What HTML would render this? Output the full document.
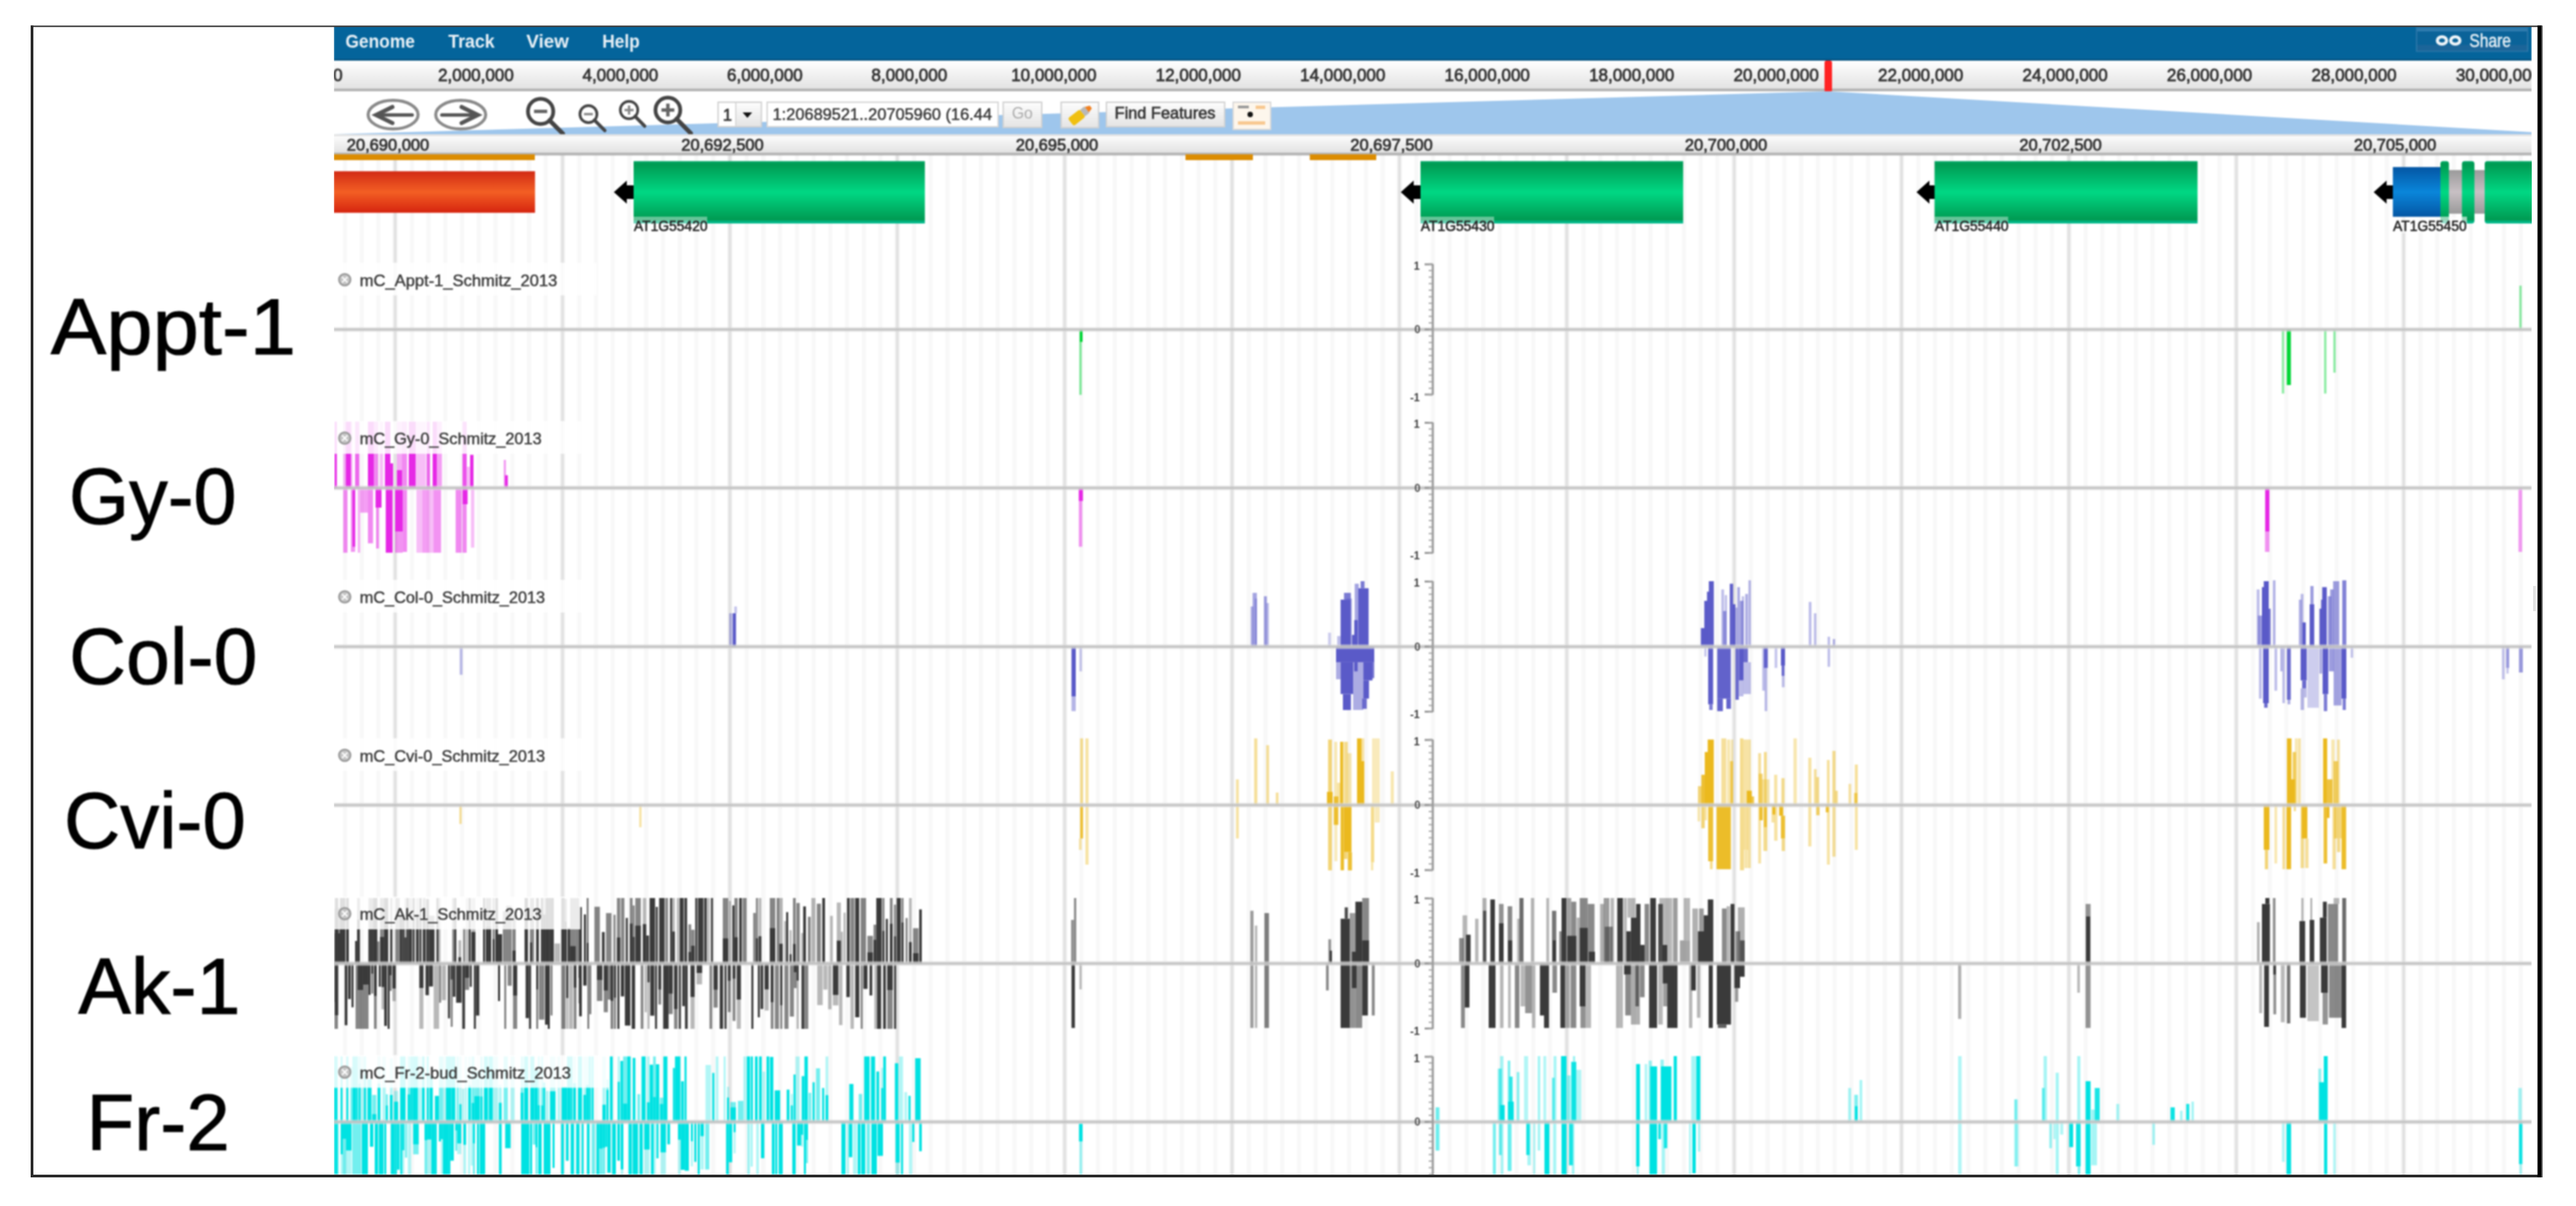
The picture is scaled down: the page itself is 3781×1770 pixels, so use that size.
<!DOCTYPE html>
<html><head><meta charset="utf-8"><title>Genome browser</title>
<style>
html,body{margin:0;padding:0;background:#fff;}
body{width:3781px;height:1770px;overflow:hidden;}
svg{display:block;font-family:"Liberation Sans",sans-serif;}
</style></head><body>
<svg width="3781" height="1770" viewBox="0 0 3781 1770">
<defs>
<linearGradient id="gGreen" x1="0" y1="0" x2="0" y2="1">
<stop offset="0" stop-color="#00a866"/><stop offset="0.05" stop-color="#009a52"/><stop offset="0.5" stop-color="#00d884"/><stop offset="0.94" stop-color="#009a52"/><stop offset="0.97" stop-color="#00b888"/><stop offset="1" stop-color="#00b888"/></linearGradient>
<linearGradient id="gRed" x1="0" y1="0" x2="0" y2="1">
<stop offset="0" stop-color="#d22a14"/><stop offset="0.5" stop-color="#f35f24"/><stop offset="1" stop-color="#d6240f"/></linearGradient>
<linearGradient id="gBlue" x1="0" y1="0" x2="0" y2="1">
<stop offset="0" stop-color="#0456a4"/><stop offset="0.5" stop-color="#0a86da"/><stop offset="1" stop-color="#0456a4"/></linearGradient>
<linearGradient id="gGray" x1="0" y1="0" x2="0" y2="1">
<stop offset="0" stop-color="#9a9a9a"/><stop offset="0.5" stop-color="#c8c0c4"/><stop offset="1" stop-color="#9a9a9a"/></linearGradient>
<linearGradient id="gRuler" x1="0" y1="0" x2="0" y2="1">
<stop offset="0" stop-color="#ffffff"/><stop offset="1" stop-color="#e2e2e2"/></linearGradient>
<linearGradient id="gBtn" x1="0" y1="0" x2="0" y2="1">
<stop offset="0" stop-color="#fdfdfd"/><stop offset="1" stop-color="#e4e4e4"/></linearGradient>
<clipPath id="clipB"><rect x="490" y="38" width="3226" height="1686"/></clipPath>
<filter id="soft" x="-2%" y="-2%" width="104%" height="104%" color-interpolation-filters="sRGB"><feGaussianBlur stdDeviation="1.0"/></filter>
<filter id="soft2" x="-5%" y="-5%" width="110%" height="110%" color-interpolation-filters="sRGB"><feGaussianBlur stdDeviation="0.9"/></filter>
</defs>
<g clip-path="url(#clipB)">
<g filter="url(#soft)">
<rect x="470.0" y="20.0" width="3270.0" height="1730.0" fill="#ffffff" />
<rect x="503.3" y="228.0" width="6.0" height="1500.0" fill="#f8f8f8" />
<rect x="527.9" y="228.0" width="6.0" height="1500.0" fill="#f8f8f8" />
<rect x="552.4" y="228.0" width="6.0" height="1500.0" fill="#f8f8f8" />
<rect x="576.4" y="228.0" width="7.2" height="1500.0" fill="#f2f2f2" />
<rect x="578.1" y="228.0" width="3.8" height="1500.0" fill="#e1e1e1" />
<rect x="601.6" y="228.0" width="6.0" height="1500.0" fill="#f8f8f8" />
<rect x="626.1" y="228.0" width="6.0" height="1500.0" fill="#f8f8f8" />
<rect x="650.7" y="228.0" width="6.0" height="1500.0" fill="#f8f8f8" />
<rect x="675.3" y="228.0" width="6.0" height="1500.0" fill="#f8f8f8" />
<rect x="699.8" y="228.0" width="6.0" height="1500.0" fill="#f8f8f8" />
<rect x="724.4" y="228.0" width="6.0" height="1500.0" fill="#f8f8f8" />
<rect x="749.0" y="228.0" width="6.0" height="1500.0" fill="#f8f8f8" />
<rect x="773.5" y="228.0" width="6.0" height="1500.0" fill="#f8f8f8" />
<rect x="798.1" y="228.0" width="6.0" height="1500.0" fill="#f8f8f8" />
<rect x="822.1" y="228.0" width="7.2" height="1500.0" fill="#f2f2f2" />
<rect x="823.8" y="228.0" width="3.8" height="1500.0" fill="#e1e1e1" />
<rect x="847.2" y="228.0" width="6.0" height="1500.0" fill="#f8f8f8" />
<rect x="871.8" y="228.0" width="6.0" height="1500.0" fill="#f8f8f8" />
<rect x="896.4" y="228.0" width="6.0" height="1500.0" fill="#f8f8f8" />
<rect x="920.9" y="228.0" width="6.0" height="1500.0" fill="#f8f8f8" />
<rect x="945.5" y="228.0" width="6.0" height="1500.0" fill="#f8f8f8" />
<rect x="970.1" y="228.0" width="6.0" height="1500.0" fill="#f8f8f8" />
<rect x="994.6" y="228.0" width="6.0" height="1500.0" fill="#f8f8f8" />
<rect x="1019.2" y="228.0" width="6.0" height="1500.0" fill="#f8f8f8" />
<rect x="1043.8" y="228.0" width="6.0" height="1500.0" fill="#f8f8f8" />
<rect x="1067.7" y="228.0" width="7.2" height="1500.0" fill="#f2f2f2" />
<rect x="1069.4" y="228.0" width="3.8" height="1500.0" fill="#e1e1e1" />
<rect x="1092.9" y="228.0" width="6.0" height="1500.0" fill="#f8f8f8" />
<rect x="1117.5" y="228.0" width="6.0" height="1500.0" fill="#f8f8f8" />
<rect x="1142.0" y="228.0" width="6.0" height="1500.0" fill="#f8f8f8" />
<rect x="1166.6" y="228.0" width="6.0" height="1500.0" fill="#f8f8f8" />
<rect x="1191.2" y="228.0" width="6.0" height="1500.0" fill="#f8f8f8" />
<rect x="1215.7" y="228.0" width="6.0" height="1500.0" fill="#f8f8f8" />
<rect x="1240.3" y="228.0" width="6.0" height="1500.0" fill="#f8f8f8" />
<rect x="1264.9" y="228.0" width="6.0" height="1500.0" fill="#f8f8f8" />
<rect x="1289.4" y="228.0" width="6.0" height="1500.0" fill="#f8f8f8" />
<rect x="1313.4" y="228.0" width="7.2" height="1500.0" fill="#f2f2f2" />
<rect x="1315.1" y="228.0" width="3.8" height="1500.0" fill="#e1e1e1" />
<rect x="1338.6" y="228.0" width="6.0" height="1500.0" fill="#f8f8f8" />
<rect x="1363.1" y="228.0" width="6.0" height="1500.0" fill="#f8f8f8" />
<rect x="1387.7" y="228.0" width="6.0" height="1500.0" fill="#f8f8f8" />
<rect x="1412.3" y="228.0" width="6.0" height="1500.0" fill="#f8f8f8" />
<rect x="1436.8" y="228.0" width="6.0" height="1500.0" fill="#f8f8f8" />
<rect x="1461.4" y="228.0" width="6.0" height="1500.0" fill="#f8f8f8" />
<rect x="1486.0" y="228.0" width="6.0" height="1500.0" fill="#f8f8f8" />
<rect x="1510.5" y="228.0" width="6.0" height="1500.0" fill="#f8f8f8" />
<rect x="1535.1" y="228.0" width="6.0" height="1500.0" fill="#f8f8f8" />
<rect x="1559.1" y="228.0" width="7.2" height="1500.0" fill="#f2f2f2" />
<rect x="1560.8" y="228.0" width="3.8" height="1500.0" fill="#e1e1e1" />
<rect x="1584.2" y="228.0" width="6.0" height="1500.0" fill="#f8f8f8" />
<rect x="1608.8" y="228.0" width="6.0" height="1500.0" fill="#f8f8f8" />
<rect x="1633.4" y="228.0" width="6.0" height="1500.0" fill="#f8f8f8" />
<rect x="1657.9" y="228.0" width="6.0" height="1500.0" fill="#f8f8f8" />
<rect x="1682.5" y="228.0" width="6.0" height="1500.0" fill="#f8f8f8" />
<rect x="1707.1" y="228.0" width="6.0" height="1500.0" fill="#f8f8f8" />
<rect x="1731.6" y="228.0" width="6.0" height="1500.0" fill="#f8f8f8" />
<rect x="1756.2" y="228.0" width="6.0" height="1500.0" fill="#f8f8f8" />
<rect x="1780.8" y="228.0" width="6.0" height="1500.0" fill="#f8f8f8" />
<rect x="1804.8" y="228.0" width="7.2" height="1500.0" fill="#f2f2f2" />
<rect x="1806.4" y="228.0" width="3.8" height="1500.0" fill="#e1e1e1" />
<rect x="1829.9" y="228.0" width="6.0" height="1500.0" fill="#f8f8f8" />
<rect x="1854.5" y="228.0" width="6.0" height="1500.0" fill="#f8f8f8" />
<rect x="1879.1" y="228.0" width="6.0" height="1500.0" fill="#f8f8f8" />
<rect x="1903.6" y="228.0" width="6.0" height="1500.0" fill="#f8f8f8" />
<rect x="1928.2" y="228.0" width="6.0" height="1500.0" fill="#f8f8f8" />
<rect x="1952.8" y="228.0" width="6.0" height="1500.0" fill="#f8f8f8" />
<rect x="1977.3" y="228.0" width="6.0" height="1500.0" fill="#f8f8f8" />
<rect x="2001.9" y="228.0" width="6.0" height="1500.0" fill="#f8f8f8" />
<rect x="2026.5" y="228.0" width="6.0" height="1500.0" fill="#f8f8f8" />
<rect x="2050.4" y="228.0" width="7.2" height="1500.0" fill="#f2f2f2" />
<rect x="2052.1" y="228.0" width="3.8" height="1500.0" fill="#e1e1e1" />
<rect x="2075.6" y="228.0" width="6.0" height="1500.0" fill="#f8f8f8" />
<rect x="2100.2" y="228.0" width="6.0" height="1500.0" fill="#f8f8f8" />
<rect x="2124.7" y="228.0" width="6.0" height="1500.0" fill="#f8f8f8" />
<rect x="2149.3" y="228.0" width="6.0" height="1500.0" fill="#f8f8f8" />
<rect x="2173.9" y="228.0" width="6.0" height="1500.0" fill="#f8f8f8" />
<rect x="2198.4" y="228.0" width="6.0" height="1500.0" fill="#f8f8f8" />
<rect x="2223.0" y="228.0" width="6.0" height="1500.0" fill="#f8f8f8" />
<rect x="2247.6" y="228.0" width="6.0" height="1500.0" fill="#f8f8f8" />
<rect x="2272.1" y="228.0" width="6.0" height="1500.0" fill="#f8f8f8" />
<rect x="2296.1" y="228.0" width="7.2" height="1500.0" fill="#f2f2f2" />
<rect x="2297.8" y="228.0" width="3.8" height="1500.0" fill="#e1e1e1" />
<rect x="2321.3" y="228.0" width="6.0" height="1500.0" fill="#f8f8f8" />
<rect x="2345.8" y="228.0" width="6.0" height="1500.0" fill="#f8f8f8" />
<rect x="2370.4" y="228.0" width="6.0" height="1500.0" fill="#f8f8f8" />
<rect x="2395.0" y="228.0" width="6.0" height="1500.0" fill="#f8f8f8" />
<rect x="2419.5" y="228.0" width="6.0" height="1500.0" fill="#f8f8f8" />
<rect x="2444.1" y="228.0" width="6.0" height="1500.0" fill="#f8f8f8" />
<rect x="2468.7" y="228.0" width="6.0" height="1500.0" fill="#f8f8f8" />
<rect x="2493.2" y="228.0" width="6.0" height="1500.0" fill="#f8f8f8" />
<rect x="2517.8" y="228.0" width="6.0" height="1500.0" fill="#f8f8f8" />
<rect x="2541.8" y="228.0" width="7.2" height="1500.0" fill="#f2f2f2" />
<rect x="2543.5" y="228.0" width="3.8" height="1500.0" fill="#e1e1e1" />
<rect x="2566.9" y="228.0" width="6.0" height="1500.0" fill="#f8f8f8" />
<rect x="2591.5" y="228.0" width="6.0" height="1500.0" fill="#f8f8f8" />
<rect x="2616.1" y="228.0" width="6.0" height="1500.0" fill="#f8f8f8" />
<rect x="2640.6" y="228.0" width="6.0" height="1500.0" fill="#f8f8f8" />
<rect x="2665.2" y="228.0" width="6.0" height="1500.0" fill="#f8f8f8" />
<rect x="2689.8" y="228.0" width="6.0" height="1500.0" fill="#f8f8f8" />
<rect x="2714.3" y="228.0" width="6.0" height="1500.0" fill="#f8f8f8" />
<rect x="2738.9" y="228.0" width="6.0" height="1500.0" fill="#f8f8f8" />
<rect x="2763.5" y="228.0" width="6.0" height="1500.0" fill="#f8f8f8" />
<rect x="2787.4" y="228.0" width="7.2" height="1500.0" fill="#f2f2f2" />
<rect x="2789.1" y="228.0" width="3.8" height="1500.0" fill="#e1e1e1" />
<rect x="2812.6" y="228.0" width="6.0" height="1500.0" fill="#f8f8f8" />
<rect x="2837.2" y="228.0" width="6.0" height="1500.0" fill="#f8f8f8" />
<rect x="2861.7" y="228.0" width="6.0" height="1500.0" fill="#f8f8f8" />
<rect x="2886.3" y="228.0" width="6.0" height="1500.0" fill="#f8f8f8" />
<rect x="2910.9" y="228.0" width="6.0" height="1500.0" fill="#f8f8f8" />
<rect x="2935.4" y="228.0" width="6.0" height="1500.0" fill="#f8f8f8" />
<rect x="2960.0" y="228.0" width="6.0" height="1500.0" fill="#f8f8f8" />
<rect x="2984.6" y="228.0" width="6.0" height="1500.0" fill="#f8f8f8" />
<rect x="3009.1" y="228.0" width="6.0" height="1500.0" fill="#f8f8f8" />
<rect x="3033.1" y="228.0" width="7.2" height="1500.0" fill="#f2f2f2" />
<rect x="3034.8" y="228.0" width="3.8" height="1500.0" fill="#e1e1e1" />
<rect x="3058.3" y="228.0" width="6.0" height="1500.0" fill="#f8f8f8" />
<rect x="3082.8" y="228.0" width="6.0" height="1500.0" fill="#f8f8f8" />
<rect x="3107.4" y="228.0" width="6.0" height="1500.0" fill="#f8f8f8" />
<rect x="3132.0" y="228.0" width="6.0" height="1500.0" fill="#f8f8f8" />
<rect x="3156.5" y="228.0" width="6.0" height="1500.0" fill="#f8f8f8" />
<rect x="3181.1" y="228.0" width="6.0" height="1500.0" fill="#f8f8f8" />
<rect x="3205.7" y="228.0" width="6.0" height="1500.0" fill="#f8f8f8" />
<rect x="3230.2" y="228.0" width="6.0" height="1500.0" fill="#f8f8f8" />
<rect x="3254.8" y="228.0" width="6.0" height="1500.0" fill="#f8f8f8" />
<rect x="3278.8" y="228.0" width="7.2" height="1500.0" fill="#f2f2f2" />
<rect x="3280.5" y="228.0" width="3.8" height="1500.0" fill="#e1e1e1" />
<rect x="3303.9" y="228.0" width="6.0" height="1500.0" fill="#f8f8f8" />
<rect x="3328.5" y="228.0" width="6.0" height="1500.0" fill="#f8f8f8" />
<rect x="3353.1" y="228.0" width="6.0" height="1500.0" fill="#f8f8f8" />
<rect x="3377.6" y="228.0" width="6.0" height="1500.0" fill="#f8f8f8" />
<rect x="3402.2" y="228.0" width="6.0" height="1500.0" fill="#f8f8f8" />
<rect x="3426.8" y="228.0" width="6.0" height="1500.0" fill="#f8f8f8" />
<rect x="3451.3" y="228.0" width="6.0" height="1500.0" fill="#f8f8f8" />
<rect x="3475.9" y="228.0" width="6.0" height="1500.0" fill="#f8f8f8" />
<rect x="3500.5" y="228.0" width="6.0" height="1500.0" fill="#f8f8f8" />
<rect x="3524.4" y="228.0" width="7.2" height="1500.0" fill="#f2f2f2" />
<rect x="3526.1" y="228.0" width="3.8" height="1500.0" fill="#e1e1e1" />
<rect x="3549.6" y="228.0" width="6.0" height="1500.0" fill="#f8f8f8" />
<rect x="3574.2" y="228.0" width="6.0" height="1500.0" fill="#f8f8f8" />
<rect x="3598.7" y="228.0" width="6.0" height="1500.0" fill="#f8f8f8" />
<rect x="3623.3" y="228.0" width="6.0" height="1500.0" fill="#f8f8f8" />
<rect x="3647.9" y="228.0" width="6.0" height="1500.0" fill="#f8f8f8" />
<rect x="3672.4" y="228.0" width="6.0" height="1500.0" fill="#f8f8f8" />
<rect x="3697.0" y="228.0" width="6.0" height="1500.0" fill="#f8f8f8" />
<rect x="490.0" y="38.0" width="3226.0" height="51.0" fill="#04649b" />
<rect x="490.0" y="86.6" width="3226.0" height="2.4" fill="#04527f" />
<text x="507" y="69.9" font-size="27" fill="#e8f0f6" text-anchor="start" font-weight="bold" textLength="102" lengthAdjust="spacingAndGlyphs">Genome</text>
<text x="658" y="69.9" font-size="27" fill="#e8f0f6" text-anchor="start" font-weight="bold" textLength="68" lengthAdjust="spacingAndGlyphs">Track</text>
<text x="772.5" y="69.9" font-size="27" fill="#e8f0f6" text-anchor="start" font-weight="bold" textLength="62.5" lengthAdjust="spacingAndGlyphs">View</text>
<text x="884" y="69.9" font-size="27" fill="#e8f0f6" text-anchor="start" font-weight="bold" textLength="55" lengthAdjust="spacingAndGlyphs">Help</text>
<rect x="3547.0" y="40.6" width="163.0" height="34.6" fill="#0a6399" stroke="#2a76a8" stroke-width="2"/>
<rect x="3548.0" y="41.6" width="161.0" height="4.5" fill="#3a82b4" opacity="0.8"/>
<rect x="3548.0" y="66.0" width="161.0" height="8.5" fill="#26689a" opacity="0.6"/>
<g fill="none" stroke="#f0f5f9" stroke-width="4.6"><ellipse cx="3584.3" cy="59.4" rx="6.8" ry="5.4"/><ellipse cx="3603.8" cy="59.4" rx="6.8" ry="5.4"/></g>
<text x="3624.5" y="69.3" font-size="27" fill="#e8f0f6" text-anchor="start" font-weight="normal" textLength="61" lengthAdjust="spacingAndGlyphs" stroke="#e8f0f6" stroke-width="0.6">Share</text>
<rect x="490.0" y="89.0" width="3226.0" height="42.0" fill="url(#gRuler)" />
<rect x="490.0" y="130.0" width="3226.0" height="4.0" fill="#b4b4b4" />
<text x="489" y="119" font-size="25" fill="#333" text-anchor="start" font-weight="normal" stroke="#333" stroke-width="1.0">0</text>
<text x="698.55" y="119" font-size="25" fill="#333" text-anchor="middle" font-weight="normal" stroke="#333" stroke-width="1.0">2,000,000</text>
<text x="910.6" y="119" font-size="25" fill="#333" text-anchor="middle" font-weight="normal" stroke="#333" stroke-width="1.0">4,000,000</text>
<text x="1122.65" y="119" font-size="25" fill="#333" text-anchor="middle" font-weight="normal" stroke="#333" stroke-width="1.0">6,000,000</text>
<text x="1334.7" y="119" font-size="25" fill="#333" text-anchor="middle" font-weight="normal" stroke="#333" stroke-width="1.0">8,000,000</text>
<text x="1546.75" y="119" font-size="25" fill="#333" text-anchor="middle" font-weight="normal" stroke="#333" stroke-width="1.0">10,000,000</text>
<text x="1758.8000000000002" y="119" font-size="25" fill="#333" text-anchor="middle" font-weight="normal" stroke="#333" stroke-width="1.0">12,000,000</text>
<text x="1970.8500000000001" y="119" font-size="25" fill="#333" text-anchor="middle" font-weight="normal" stroke="#333" stroke-width="1.0">14,000,000</text>
<text x="2182.9" y="119" font-size="25" fill="#333" text-anchor="middle" font-weight="normal" stroke="#333" stroke-width="1.0">16,000,000</text>
<text x="2394.95" y="119" font-size="25" fill="#333" text-anchor="middle" font-weight="normal" stroke="#333" stroke-width="1.0">18,000,000</text>
<text x="2607.0" y="119" font-size="25" fill="#333" text-anchor="middle" font-weight="normal" stroke="#333" stroke-width="1.0">20,000,000</text>
<text x="2819.05" y="119" font-size="25" fill="#333" text-anchor="middle" font-weight="normal" stroke="#333" stroke-width="1.0">22,000,000</text>
<text x="3031.1000000000004" y="119" font-size="25" fill="#333" text-anchor="middle" font-weight="normal" stroke="#333" stroke-width="1.0">24,000,000</text>
<text x="3243.15" y="119" font-size="25" fill="#333" text-anchor="middle" font-weight="normal" stroke="#333" stroke-width="1.0">26,000,000</text>
<text x="3455.2000000000003" y="119" font-size="25" fill="#333" text-anchor="middle" font-weight="normal" stroke="#333" stroke-width="1.0">28,000,000</text>
<text x="3667.25" y="119" font-size="25" fill="#333" text-anchor="middle" font-weight="normal" stroke="#333" stroke-width="1.0">30,000,000</text>
<rect x="2678.0" y="89.0" width="11.0" height="46.0" fill="#ff2222" rx="3"/>
<rect x="490.0" y="134.0" width="3226.0" height="65.0" fill="#ffffff" />
<polygon points="2683,134 3716,194 3716,197 490,197" fill="#9ec6ec"/>
<g fill="none" stroke="#666" stroke-width="3.5" stroke-linecap="round" stroke-linejoin="round">
<ellipse cx="577" cy="168.3" rx="36.7" ry="21" stroke="#8a8a8a" stroke-width="4.5"/>
<ellipse cx="676.2" cy="168.3" rx="36.7" ry="21" stroke="#8a8a8a" stroke-width="4.5"/>
<path d="M605 168.8 H554" stroke-width="5" stroke="#555"/><path d="M576 157 L552 168.8 L576 180.6" stroke-width="6" stroke="#555" stroke-linejoin="miter"/>
<path d="M648.5 168.8 H699.5" stroke-width="5" stroke="#555"/><path d="M677.5 157 L701.5 168.8 L677.5 180.6" stroke-width="6" stroke="#555" stroke-linejoin="miter"/>
<circle cx="793.5" cy="163.5" r="18.6" stroke="#444" stroke-width="5.5"/>
<path d="M806.7 176.7 L826 196" stroke="#444" stroke-width="6.5"/>
<path d="M783.828 163.5 H803.172" stroke="#666" stroke-width="5.0" stroke-linecap="butt"/>
<circle cx="863.7" cy="167.5" r="12.5" stroke="#444" stroke-width="4"/>
<path d="M872.5 176.3 L887.7 191.5" stroke="#444" stroke-width="5"/>
<path d="M857.2 167.5 H870.2" stroke="#888" stroke-width="3.5" stroke-linecap="butt"/>
<circle cx="923.3" cy="161.5" r="12.8" stroke="#444" stroke-width="4"/>
<path d="M932.2 170.7 L946.2 185" stroke="#444" stroke-width="5"/>
<path d="M916.644 161.5 H929.9559999999999" stroke="#888" stroke-width="3.5" stroke-linecap="butt"/>
<path d="M923.3 154.844 V168.156" stroke="#888" stroke-width="3.5" stroke-linecap="butt"/>
<circle cx="980.3" cy="161.5" r="18.2" stroke="#444" stroke-width="5.5"/>
<path d="M993.1 174.5 L1013.8 195.5" stroke="#444" stroke-width="6.5"/>
<path d="M970.8359999999999 161.5 H989.764" stroke="#666" stroke-width="5.0" stroke-linecap="butt"/>
<path d="M980.3 152.036 V170.964" stroke="#666" stroke-width="5.0" stroke-linecap="butt"/>
</g>
<rect x="1054.0" y="150.0" width="63.5" height="36.0" fill="url(#gBtn)" stroke="#d0d0d0" stroke-width="2"/>
<rect x="1055.0" y="151.0" width="24.0" height="34.0" fill="#ffffff" />
<rect x="1079.0" y="151.0" width="2.0" height="34.0" fill="#d8d8d8" />
<text x="1061" y="176.5" font-size="24" fill="#333" text-anchor="start" font-weight="normal" stroke="#333" stroke-width="0.8">1</text>
<polygon points="1090,165 1104,165 1097,173" fill="#111"/>
<rect x="1126.0" y="150.0" width="339.0" height="36.0" fill="#ffffff" stroke="#d4d4d4" stroke-width="2"/>
<text x="1134" y="175.5" font-size="24" fill="#3a3a3a" text-anchor="start" font-weight="normal" textLength="322" lengthAdjust="spacingAndGlyphs" stroke="#3a3a3a" stroke-width="0.6">1:20689521..20705960 (16.44</text>
<rect x="1472.5" y="150.0" width="56.5" height="37.0" fill="url(#gBtn)" stroke="#d0d0d0" stroke-width="2"/>
<text x="1500.5" y="174" font-size="23" fill="#aaa" text-anchor="middle" font-weight="normal" >Go</text>
<rect x="1557.5" y="150.0" width="55.0" height="37.5" fill="url(#gBtn)" stroke="#d0d0d0" stroke-width="2"/>
<g transform="translate(1585,169) rotate(-38)"><rect x="-17" y="-7" width="22" height="14" rx="3" fill="#f0c010"/><rect x="5" y="-6" width="8" height="12" fill="#b8b8b8"/><polygon points="13,-5 20,-2 20,3 13,5" fill="#f08020"/></g>
<rect x="1624.0" y="150.0" width="173.5" height="36.0" fill="url(#gBtn)" stroke="#d0d0d0" stroke-width="2"/>
<text x="1636" y="174" font-size="24" fill="#333" text-anchor="start" font-weight="normal" textLength="148" lengthAdjust="spacingAndGlyphs" stroke="#333" stroke-width="0.8">Find Features</text>
<rect x="1810.0" y="150.0" width="55.0" height="40.0" fill="#fdf6ec" stroke="#d8d8d8" stroke-width="2"/>
<circle cx="1835" cy="168" r="4" fill="#111"/>
<rect x="1817.0" y="178.0" width="40.0" height="5.0" fill="#f8c890" />
<rect x="1843.0" y="155.0" width="14.0" height="5.0" fill="#f8c890" />
<rect x="1817.0" y="155.0" width="16.0" height="4.0" fill="#999" />
<rect x="490.0" y="197.0" width="3226.0" height="27.0" fill="url(#gRuler)" />
<rect x="490.0" y="197.0" width="3226.0" height="3.0" fill="#e4e4e4" />
<rect x="490.0" y="224.0" width="3226.0" height="4.2" fill="#b6b6b6" />
<text x="509.0" y="221" font-size="24" fill="#333" text-anchor="start" font-weight="normal" textLength="121" lengthAdjust="spacingAndGlyphs" stroke="#333" stroke-width="1.0">20,690,000</text>
<text x="1000.0" y="221" font-size="24" fill="#333" text-anchor="start" font-weight="normal" textLength="121" lengthAdjust="spacingAndGlyphs" stroke="#333" stroke-width="1.0">20,692,500</text>
<text x="1491.0" y="221" font-size="24" fill="#333" text-anchor="start" font-weight="normal" textLength="121" lengthAdjust="spacingAndGlyphs" stroke="#333" stroke-width="1.0">20,695,000</text>
<text x="1982.0" y="221" font-size="24" fill="#333" text-anchor="start" font-weight="normal" textLength="121" lengthAdjust="spacingAndGlyphs" stroke="#333" stroke-width="1.0">20,697,500</text>
<text x="2473.0" y="221" font-size="24" fill="#333" text-anchor="start" font-weight="normal" textLength="121" lengthAdjust="spacingAndGlyphs" stroke="#333" stroke-width="1.0">20,700,000</text>
<text x="2964.0" y="221" font-size="24" fill="#333" text-anchor="start" font-weight="normal" textLength="121" lengthAdjust="spacingAndGlyphs" stroke="#333" stroke-width="1.0">20,702,500</text>
<text x="3455.0" y="221" font-size="24" fill="#333" text-anchor="start" font-weight="normal" textLength="121" lengthAdjust="spacingAndGlyphs" stroke="#333" stroke-width="1.0">20,705,000</text>
<rect x="490.0" y="226.5" width="295.0" height="8.5" fill="#dc8c00" />
<rect x="1740.0" y="226.5" width="99.0" height="8.5" fill="#dc8c00" />
<rect x="1922.5" y="226.5" width="97.5" height="8.5" fill="#dc8c00" />
<rect x="490.0" y="251.3" width="295.3" height="61.0" fill="url(#gRed)" />
<polygon points="901,282 920,265 920,272 931,272 931,292 920,292 920,299" fill="#000"/>
<rect x="930.0" y="236.5" width="427.5" height="91.5" fill="url(#gGreen)" />
<rect x="930.0" y="318.0" width="108.0" height="24.0" fill="#ffffff" opacity="0.4"/>
<text x="930.5" y="339.4" font-size="22" fill="#222" text-anchor="start" font-weight="normal" textLength="108" lengthAdjust="spacingAndGlyphs" stroke="#222" stroke-width="0.7">AT1G55420</text>
<polygon points="2056,282 2075,265 2075,272 2086,272 2086,292 2075,292 2075,299" fill="#000"/>
<rect x="2085.0" y="236.5" width="385.5" height="91.5" fill="url(#gGreen)" />
<rect x="2085.0" y="318.0" width="108.0" height="24.0" fill="#ffffff" opacity="0.4"/>
<text x="2085.5" y="339.4" font-size="22" fill="#222" text-anchor="start" font-weight="normal" textLength="108" lengthAdjust="spacingAndGlyphs" stroke="#222" stroke-width="0.7">AT1G55430</text>
<polygon points="2813,282 2832,265 2832,272 2843,272 2843,292 2832,292 2832,299" fill="#000"/>
<rect x="2839.5" y="236.5" width="386.0" height="91.5" fill="url(#gGreen)" />
<rect x="2839.5" y="318.0" width="108.0" height="24.0" fill="#ffffff" opacity="0.4"/>
<text x="2840.0" y="339.4" font-size="22" fill="#222" text-anchor="start" font-weight="normal" textLength="108" lengthAdjust="spacingAndGlyphs" stroke="#222" stroke-width="0.7">AT1G55440</text>
<polygon points="3484,282 3503,265 3503,272 3514,272 3514,292 3503,292 3503,299" fill="#000"/>
<rect x="3593.0" y="249.6" width="60.0" height="64.0" fill="url(#gGray)" />
<rect x="3512.2" y="245.2" width="71.0" height="73.2" fill="url(#gBlue)" />
<rect x="3582.0" y="236.5" width="12.5" height="91.5" fill="url(#gGreen)" rx="4"/>
<rect x="3613.6" y="236.5" width="18.3" height="91.5" fill="url(#gGreen)" rx="4"/>
<rect x="3647.0" y="236.5" width="80.0" height="91.5" fill="url(#gGreen)" rx="4"/>
<rect x="3512.0" y="318.0" width="109.0" height="24.0" fill="#ffffff" opacity="0.6"/>
<text x="3512.5" y="339.4" font-size="22" fill="#222" text-anchor="start" font-weight="normal" textLength="108" lengthAdjust="spacingAndGlyphs" stroke="#222" stroke-width="0.7">AT1G55450</text>
<rect x="1584.2" y="483.5" width="3.5" height="96.0" fill="#00d535" opacity="0.5"/>
<rect x="1585.0" y="483.5" width="4.0" height="18.2" fill="#00d535" />
<rect x="3349.2" y="483.5" width="3.5" height="94.1" fill="#00d535" opacity="0.45"/>
<rect x="3356.5" y="483.5" width="6.0" height="81.6" fill="#00d535" />
<rect x="3411.2" y="483.5" width="3.5" height="94.1" fill="#00d535" opacity="0.45"/>
<rect x="3424.8" y="483.5" width="3.5" height="63.4" fill="#00d535" opacity="0.45"/>
<rect x="3697.8" y="419.2" width="3.5" height="64.3" fill="#00d535" opacity="0.45"/>
<rect x="491.2" y="618.8" width="3.2" height="97.5" fill="#e628e6" />
<rect x="503.8" y="618.8" width="3.8" height="97.5" fill="#e628e6" opacity="0.35"/>
<rect x="507.5" y="618.8" width="7.5" height="97.5" fill="#e628e6" />
<rect x="515.0" y="618.8" width="2.5" height="97.5" fill="#e628e6" opacity="0.35"/>
<rect x="521.2" y="618.8" width="6.2" height="97.5" fill="#e628e6" opacity="0.7"/>
<rect x="540.0" y="618.8" width="8.8" height="97.5" fill="#e628e6" />
<rect x="548.8" y="618.8" width="6.2" height="97.5" fill="#e628e6" opacity="0.55"/>
<rect x="557.5" y="618.8" width="5.0" height="97.5" fill="#e628e6" opacity="0.3"/>
<rect x="565.0" y="618.8" width="8.0" height="97.5" fill="#e628e6" />
<rect x="573.0" y="680.0" width="4.0" height="36.2" fill="#e628e6" />
<rect x="582.5" y="690.0" width="7.5" height="26.2" fill="#e628e6" />
<rect x="582.5" y="618.8" width="7.5" height="71.2" fill="#e628e6" opacity="0.4"/>
<rect x="590.0" y="618.8" width="7.5" height="97.5" fill="#e628e6" opacity="0.55"/>
<rect x="600.0" y="618.8" width="10.0" height="97.5" fill="#e628e6" />
<rect x="610.0" y="618.8" width="15.0" height="97.5" fill="#e628e6" opacity="0.3"/>
<rect x="626.2" y="618.8" width="5.0" height="97.5" fill="#e628e6" opacity="0.7"/>
<rect x="635.0" y="618.8" width="6.2" height="97.5" fill="#e628e6" />
<rect x="641.2" y="618.8" width="7.5" height="97.5" fill="#e628e6" opacity="0.45"/>
<rect x="678.8" y="618.8" width="6.2" height="97.5" fill="#e628e6" opacity="0.8"/>
<rect x="685.5" y="685.0" width="4.0" height="31.2" fill="#e628e6" opacity="0.35"/>
<rect x="690.0" y="667.5" width="5.0" height="48.8" fill="#e628e6" />
<rect x="739.5" y="675.0" width="3.0" height="41.2" fill="#e628e6" opacity="0.5"/>
<rect x="741.2" y="697.5" width="4.2" height="18.8" fill="#e628e6" />
<rect x="503.8" y="716.2" width="6.2" height="95.0" fill="#e628e6" opacity="0.55"/>
<rect x="515.0" y="716.2" width="6.2" height="93.8" fill="#e628e6" opacity="0.5"/>
<rect x="517.5" y="716.2" width="3.8" height="86.2" fill="#e628e6" />
<rect x="525.0" y="716.2" width="3.8" height="95.0" fill="#e628e6" opacity="0.35"/>
<rect x="528.8" y="716.2" width="11.2" height="36.2" fill="#e628e6" opacity="0.45"/>
<rect x="540.0" y="716.2" width="7.5" height="81.2" fill="#e628e6" opacity="0.55"/>
<rect x="551.2" y="716.2" width="8.8" height="28.8" fill="#e628e6" />
<rect x="552.0" y="745.0" width="4.2" height="60.0" fill="#e628e6" opacity="0.55"/>
<rect x="566.2" y="716.2" width="10.0" height="95.0" fill="#e628e6" />
<rect x="580.0" y="716.2" width="11.2" height="63.8" fill="#e628e6" />
<rect x="580.0" y="780.0" width="11.2" height="31.2" fill="#e628e6" opacity="0.5"/>
<rect x="591.2" y="716.2" width="6.2" height="93.8" fill="#e628e6" opacity="0.55"/>
<rect x="611.2" y="716.2" width="8.8" height="95.0" fill="#e628e6" opacity="0.3"/>
<rect x="620.0" y="716.2" width="10.0" height="95.0" fill="#e628e6" opacity="0.45"/>
<rect x="630.0" y="716.2" width="6.2" height="95.0" fill="#e628e6" opacity="0.3"/>
<rect x="636.2" y="716.2" width="11.2" height="95.0" fill="#e628e6" opacity="0.5"/>
<rect x="668.8" y="716.2" width="8.8" height="95.0" fill="#e628e6" opacity="0.55"/>
<rect x="678.8" y="716.2" width="7.5" height="23.8" fill="#e628e6" />
<rect x="678.8" y="740.0" width="6.2" height="71.2" fill="#e628e6" opacity="0.55"/>
<rect x="691.2" y="716.2" width="5.0" height="87.5" fill="#e628e6" opacity="0.3"/>
<rect x="1583.5" y="716.0" width="5.0" height="86.4" fill="#e628e6" opacity="0.5"/>
<rect x="1583.5" y="716.0" width="6.0" height="19.2" fill="#e628e6" />
<rect x="3324.5" y="716.0" width="6.5" height="94.0" fill="#e628e6" opacity="0.5"/>
<rect x="3325.0" y="716.0" width="6.0" height="64.0" fill="#e628e6" />
<rect x="3696.5" y="716.0" width="5.5" height="94.0" fill="#e628e6" opacity="0.45"/>
<rect x="491.0" y="1332.7" width="8.0" height="81.3" fill="#3a3a3a" opacity="0.62"/>
<rect x="491.0" y="1369.8" width="8.0" height="44.2" fill="#3a3a3a" />
<rect x="499.0" y="1318.0" width="8.0" height="96.0" fill="#3a3a3a" />
<rect x="508.0" y="1318.0" width="4.0" height="96.0" fill="#3a3a3a" />
<rect x="521.2" y="1381.0" width="3.0" height="33.0" fill="#3a3a3a" />
<rect x="524.2" y="1318.0" width="4.0" height="96.0" fill="#3a3a3a" opacity="0.62"/>
<rect x="524.2" y="1349.6" width="4.0" height="64.4" fill="#3a3a3a" />
<rect x="540.8" y="1318.0" width="3.0" height="96.0" fill="#3a3a3a" opacity="0.62"/>
<rect x="540.8" y="1363.5" width="3.0" height="50.5" fill="#3a3a3a" />
<rect x="543.8" y="1318.0" width="4.0" height="96.0" fill="#3a3a3a" opacity="0.62"/>
<rect x="543.8" y="1363.0" width="4.0" height="51.0" fill="#3a3a3a" />
<rect x="547.8" y="1318.0" width="6.0" height="96.0" fill="#3a3a3a" />
<rect x="553.8" y="1381.7" width="3.0" height="32.3" fill="#3a3a3a" opacity="0.62"/>
<rect x="557.8" y="1318.0" width="6.0" height="96.0" fill="#3a3a3a" opacity="0.62"/>
<rect x="557.8" y="1375.1" width="6.0" height="38.9" fill="#3a3a3a" />
<rect x="563.8" y="1318.0" width="6.0" height="96.0" fill="#3a3a3a" />
<rect x="572.8" y="1318.0" width="3.0" height="96.0" fill="#3a3a3a" opacity="0.62"/>
<rect x="572.8" y="1363.2" width="3.0" height="50.8" fill="#3a3a3a" />
<rect x="580.6" y="1318.0" width="6.0" height="96.0" fill="#3a3a3a" opacity="0.62"/>
<rect x="586.6" y="1345.4" width="4.0" height="68.6" fill="#3a3a3a" />
<rect x="590.6" y="1342.1" width="3.0" height="71.9" fill="#3a3a3a" />
<rect x="593.6" y="1318.0" width="3.0" height="96.0" fill="#3a3a3a" opacity="0.36"/>
<rect x="593.6" y="1375.8" width="3.0" height="38.2" fill="#3a3a3a" />
<rect x="596.6" y="1318.0" width="3.0" height="96.0" fill="#3a3a3a" />
<rect x="599.6" y="1318.0" width="5.0" height="96.0" fill="#3a3a3a" opacity="0.36"/>
<rect x="599.6" y="1362.4" width="5.0" height="51.6" fill="#3a3a3a" />
<rect x="605.6" y="1318.0" width="3.0" height="96.0" fill="#3a3a3a" />
<rect x="610.6" y="1318.0" width="4.0" height="96.0" fill="#3a3a3a" opacity="0.36"/>
<rect x="610.6" y="1344.4" width="4.0" height="69.6" fill="#3a3a3a" />
<rect x="615.6" y="1318.0" width="3.0" height="96.0" fill="#3a3a3a" />
<rect x="620.6" y="1318.0" width="4.0" height="96.0" fill="#3a3a3a" opacity="0.62"/>
<rect x="620.6" y="1346.6" width="4.0" height="67.4" fill="#3a3a3a" />
<rect x="625.6" y="1319.5" width="4.0" height="94.5" fill="#3a3a3a" />
<rect x="629.6" y="1343.9" width="8.0" height="70.1" fill="#3a3a3a" opacity="0.62"/>
<rect x="629.6" y="1364.4" width="8.0" height="49.6" fill="#3a3a3a" />
<rect x="640.6" y="1318.0" width="3.0" height="96.0" fill="#3a3a3a" />
<rect x="643.6" y="1318.0" width="3.0" height="96.0" fill="#3a3a3a" opacity="0.36"/>
<rect x="663.8" y="1318.0" width="3.0" height="96.0" fill="#3a3a3a" opacity="0.62"/>
<rect x="666.8" y="1318.0" width="3.0" height="96.0" fill="#3a3a3a" />
<rect x="672.8" y="1380.1" width="4.0" height="33.9" fill="#3a3a3a" opacity="0.36"/>
<rect x="672.8" y="1404.8" width="4.0" height="9.2" fill="#3a3a3a" />
<rect x="679.8" y="1361.6" width="3.0" height="52.4" fill="#3a3a3a" opacity="0.62"/>
<rect x="683.8" y="1318.0" width="3.0" height="96.0" fill="#3a3a3a" opacity="0.36"/>
<rect x="687.8" y="1318.0" width="3.0" height="96.0" fill="#3a3a3a" />
<rect x="691.8" y="1318.0" width="6.0" height="96.0" fill="#3a3a3a" opacity="0.36"/>
<rect x="691.8" y="1367.8" width="6.0" height="46.2" fill="#3a3a3a" />
<rect x="709.0" y="1318.0" width="3.0" height="96.0" fill="#3a3a3a" />
<rect x="713.0" y="1318.0" width="8.0" height="96.0" fill="#3a3a3a" opacity="0.62"/>
<rect x="713.0" y="1360.6" width="8.0" height="53.4" fill="#3a3a3a" />
<rect x="723.0" y="1318.0" width="3.0" height="96.0" fill="#3a3a3a" opacity="0.62"/>
<rect x="723.0" y="1378.4" width="3.0" height="35.6" fill="#3a3a3a" />
<rect x="727.0" y="1318.0" width="4.0" height="96.0" fill="#3a3a3a" />
<rect x="731.0" y="1371.1" width="6.0" height="42.9" fill="#3a3a3a" />
<rect x="738.0" y="1337.4" width="5.0" height="76.6" fill="#3a3a3a" opacity="0.62"/>
<rect x="743.0" y="1329.4" width="8.0" height="84.6" fill="#3a3a3a" opacity="0.62"/>
<rect x="752.0" y="1343.2" width="5.0" height="70.8" fill="#3a3a3a" opacity="0.62"/>
<rect x="752.0" y="1395.2" width="5.0" height="18.8" fill="#3a3a3a" />
<rect x="769.9" y="1318.0" width="5.0" height="96.0" fill="#3a3a3a" />
<rect x="777.9" y="1318.0" width="3.0" height="96.0" fill="#3a3a3a" opacity="0.62"/>
<rect x="777.9" y="1383.2" width="3.0" height="30.8" fill="#3a3a3a" />
<rect x="780.9" y="1318.0" width="3.0" height="96.0" fill="#3a3a3a" opacity="0.62"/>
<rect x="786.9" y="1318.0" width="4.0" height="96.0" fill="#3a3a3a" />
<rect x="793.9" y="1318.0" width="3.0" height="96.0" fill="#3a3a3a" />
<rect x="796.9" y="1318.0" width="4.0" height="96.0" fill="#3a3a3a" opacity="0.36"/>
<rect x="796.9" y="1342.2" width="4.0" height="71.8" fill="#3a3a3a" />
<rect x="800.9" y="1318.0" width="6.0" height="96.0" fill="#3a3a3a" />
<rect x="806.9" y="1318.0" width="6.0" height="96.0" fill="#3a3a3a" />
<rect x="813.9" y="1384.7" width="8.0" height="29.3" fill="#3a3a3a" opacity="0.36"/>
<rect x="823.9" y="1318.0" width="5.0" height="96.0" fill="#3a3a3a" />
<rect x="828.9" y="1319.3" width="3.0" height="94.7" fill="#3a3a3a" opacity="0.62"/>
<rect x="828.9" y="1352.9" width="3.0" height="61.1" fill="#3a3a3a" />
<rect x="832.9" y="1361.8" width="4.0" height="52.2" fill="#3a3a3a" />
<rect x="836.9" y="1318.0" width="8.0" height="96.0" fill="#3a3a3a" opacity="0.62"/>
<rect x="836.9" y="1388.6" width="8.0" height="25.4" fill="#3a3a3a" />
<rect x="844.9" y="1318.0" width="5.1" height="96.0" fill="#3a3a3a" opacity="0.62"/>
<rect x="491.0" y="1414.0" width="5.0" height="96.0" fill="#3a3a3a" opacity="0.62"/>
<rect x="491.0" y="1414.0" width="5.0" height="56.8" fill="#3a3a3a" />
<rect x="505.9" y="1414.0" width="4.0" height="90.7" fill="#3a3a3a" />
<rect x="510.9" y="1414.0" width="4.0" height="52.3" fill="#3a3a3a" />
<rect x="515.9" y="1414.0" width="3.0" height="64.4" fill="#3a3a3a" />
<rect x="521.9" y="1414.0" width="3.0" height="96.0" fill="#3a3a3a" opacity="0.62"/>
<rect x="524.9" y="1414.0" width="8.0" height="96.0" fill="#3a3a3a" opacity="0.62"/>
<rect x="524.9" y="1414.0" width="8.0" height="38.9" fill="#3a3a3a" />
<rect x="532.9" y="1414.0" width="8.0" height="96.0" fill="#3a3a3a" opacity="0.62"/>
<rect x="532.9" y="1414.0" width="8.0" height="31.0" fill="#3a3a3a" />
<rect x="540.9" y="1414.0" width="3.0" height="46.2" fill="#3a3a3a" />
<rect x="544.9" y="1414.0" width="3.0" height="44.3" fill="#3a3a3a" opacity="0.62"/>
<rect x="544.9" y="1414.0" width="3.0" height="15.0" fill="#3a3a3a" />
<rect x="548.9" y="1414.0" width="4.0" height="96.0" fill="#3a3a3a" opacity="0.62"/>
<rect x="548.9" y="1414.0" width="4.0" height="47.7" fill="#3a3a3a" />
<rect x="555.9" y="1414.0" width="3.0" height="34.1" fill="#3a3a3a" />
<rect x="559.9" y="1414.0" width="4.0" height="67.4" fill="#3a3a3a" opacity="0.36"/>
<rect x="559.9" y="1414.0" width="4.0" height="34.6" fill="#3a3a3a" />
<rect x="563.9" y="1414.0" width="4.0" height="91.7" fill="#3a3a3a" />
<rect x="568.9" y="1414.0" width="3.0" height="96.0" fill="#3a3a3a" />
<rect x="571.9" y="1414.0" width="3.0" height="40.3" fill="#3a3a3a" opacity="0.62"/>
<rect x="571.9" y="1414.0" width="3.0" height="17.3" fill="#3a3a3a" />
<rect x="575.9" y="1414.0" width="5.0" height="55.3" fill="#3a3a3a" opacity="0.36"/>
<rect x="575.9" y="1414.0" width="5.0" height="36.8" fill="#3a3a3a" />
<rect x="615.5" y="1414.0" width="6.0" height="96.0" fill="#3a3a3a" opacity="0.36"/>
<rect x="615.5" y="1414.0" width="6.0" height="36.0" fill="#3a3a3a" />
<rect x="624.5" y="1414.0" width="5.0" height="46.6" fill="#3a3a3a" />
<rect x="629.5" y="1414.0" width="6.0" height="33.8" fill="#3a3a3a" />
<rect x="636.5" y="1414.0" width="8.0" height="96.0" fill="#3a3a3a" opacity="0.36"/>
<rect x="644.5" y="1414.0" width="3.0" height="57.6" fill="#3a3a3a" opacity="0.62"/>
<rect x="648.5" y="1414.0" width="6.0" height="53.9" fill="#3a3a3a" opacity="0.36"/>
<rect x="657.5" y="1414.0" width="3.0" height="80.6" fill="#3a3a3a" />
<rect x="661.5" y="1414.0" width="3.0" height="93.0" fill="#3a3a3a" opacity="0.62"/>
<rect x="661.5" y="1414.0" width="3.0" height="23.5" fill="#3a3a3a" />
<rect x="664.5" y="1414.0" width="4.0" height="48.9" fill="#3a3a3a" />
<rect x="669.5" y="1414.0" width="8.0" height="57.7" fill="#3a3a3a" />
<rect x="678.5" y="1414.0" width="4.0" height="96.0" fill="#3a3a3a" />
<rect x="682.5" y="1414.0" width="6.0" height="38.8" fill="#3a3a3a" opacity="0.62"/>
<rect x="682.5" y="1414.0" width="6.0" height="21.1" fill="#3a3a3a" />
<rect x="689.5" y="1414.0" width="3.0" height="34.3" fill="#3a3a3a" />
<rect x="695.5" y="1414.0" width="3.0" height="96.0" fill="#3a3a3a" />
<rect x="698.5" y="1414.0" width="5.0" height="76.5" fill="#3a3a3a" />
<rect x="731.0" y="1414.0" width="3.0" height="55.2" fill="#3a3a3a" />
<rect x="740.1" y="1414.0" width="3.0" height="96.0" fill="#3a3a3a" opacity="0.62"/>
<rect x="745.1" y="1414.0" width="6.0" height="32.7" fill="#3a3a3a" opacity="0.62"/>
<rect x="753.1" y="1414.0" width="6.0" height="96.0" fill="#3a3a3a" opacity="0.62"/>
<rect x="753.1" y="1414.0" width="6.0" height="47.1" fill="#3a3a3a" />
<rect x="771.5" y="1414.0" width="5.0" height="80.3" fill="#3a3a3a" />
<rect x="776.5" y="1414.0" width="3.0" height="96.0" fill="#3a3a3a" />
<rect x="787.0" y="1414.0" width="3.0" height="96.0" fill="#3a3a3a" opacity="0.62"/>
<rect x="787.0" y="1414.0" width="3.0" height="38.1" fill="#3a3a3a" />
<rect x="791.0" y="1414.0" width="8.0" height="82.5" fill="#3a3a3a" opacity="0.62"/>
<rect x="800.0" y="1414.0" width="4.0" height="89.9" fill="#3a3a3a" />
<rect x="804.0" y="1414.0" width="3.0" height="96.0" fill="#3a3a3a" />
<rect x="808.0" y="1414.0" width="3.0" height="76.4" fill="#3a3a3a" opacity="0.62"/>
<rect x="824.1" y="1414.0" width="6.0" height="96.0" fill="#3a3a3a" opacity="0.62"/>
<rect x="831.1" y="1414.0" width="3.0" height="96.0" fill="#3a3a3a" opacity="0.36"/>
<rect x="831.1" y="1414.0" width="3.0" height="50.8" fill="#3a3a3a" />
<rect x="835.1" y="1414.0" width="6.0" height="96.0" fill="#3a3a3a" opacity="0.36"/>
<rect x="842.1" y="1414.0" width="4.0" height="96.0" fill="#3a3a3a" opacity="0.62"/>
<rect x="842.1" y="1414.0" width="4.0" height="35.5" fill="#3a3a3a" />
<rect x="849.1" y="1414.0" width="0.9" height="58.6" fill="#3a3a3a" opacity="0.62"/>
<rect x="849.1" y="1414.0" width="0.9" height="21.3" fill="#3a3a3a" />
<rect x="850.0" y="1331.3" width="4.0" height="82.7" fill="#3a3a3a" />
<rect x="857.0" y="1342.1" width="3.0" height="71.9" fill="#3a3a3a" />
<rect x="861.0" y="1318.0" width="3.0" height="96.0" fill="#3a3a3a" opacity="0.62"/>
<rect x="861.0" y="1383.9" width="3.0" height="30.1" fill="#3a3a3a" />
<rect x="872.5" y="1330.8" width="8.0" height="83.2" fill="#3a3a3a" opacity="0.62"/>
<rect x="883.5" y="1367.9" width="4.0" height="46.1" fill="#3a3a3a" />
<rect x="889.5" y="1340.1" width="8.0" height="73.9" fill="#3a3a3a" opacity="0.62"/>
<rect x="900.5" y="1342.6" width="3.0" height="71.4" fill="#3a3a3a" opacity="0.62"/>
<rect x="905.5" y="1318.0" width="5.0" height="96.0" fill="#3a3a3a" opacity="0.62"/>
<rect x="905.5" y="1375.9" width="5.0" height="38.1" fill="#3a3a3a" />
<rect x="911.5" y="1318.0" width="5.0" height="96.0" fill="#3a3a3a" opacity="0.62"/>
<rect x="918.5" y="1347.2" width="3.0" height="66.8" fill="#3a3a3a" />
<rect x="924.5" y="1318.0" width="4.0" height="96.0" fill="#3a3a3a" opacity="0.62"/>
<rect x="924.5" y="1355.5" width="4.0" height="58.5" fill="#3a3a3a" />
<rect x="928.5" y="1328.9" width="3.0" height="85.1" fill="#3a3a3a" opacity="0.62"/>
<rect x="928.5" y="1375.1" width="3.0" height="38.9" fill="#3a3a3a" />
<rect x="932.5" y="1318.0" width="8.0" height="96.0" fill="#3a3a3a" opacity="0.62"/>
<rect x="932.5" y="1358.5" width="8.0" height="55.5" fill="#3a3a3a" />
<rect x="943.5" y="1318.0" width="5.0" height="96.0" fill="#3a3a3a" opacity="0.36"/>
<rect x="943.5" y="1356.3" width="5.0" height="57.7" fill="#3a3a3a" />
<rect x="948.5" y="1373.0" width="4.0" height="41.0" fill="#3a3a3a" />
<rect x="953.5" y="1318.0" width="8.0" height="96.0" fill="#3a3a3a" />
<rect x="962.5" y="1331.0" width="3.0" height="83.0" fill="#3a3a3a" />
<rect x="967.5" y="1318.0" width="8.0" height="96.0" fill="#3a3a3a" />
<rect x="976.5" y="1318.0" width="4.0" height="96.0" fill="#3a3a3a" opacity="0.62"/>
<rect x="983.5" y="1318.0" width="3.0" height="96.0" fill="#3a3a3a" />
<rect x="986.5" y="1318.0" width="4.0" height="96.0" fill="#3a3a3a" opacity="0.36"/>
<rect x="986.5" y="1367.2" width="4.0" height="46.8" fill="#3a3a3a" />
<rect x="993.5" y="1318.0" width="3.0" height="96.0" fill="#3a3a3a" opacity="0.36"/>
<rect x="997.5" y="1318.0" width="6.0" height="96.0" fill="#3a3a3a" />
<rect x="1004.5" y="1318.0" width="4.0" height="96.0" fill="#3a3a3a" />
<rect x="1010.5" y="1356.6" width="4.0" height="57.4" fill="#3a3a3a" opacity="0.62"/>
<rect x="1010.5" y="1397.2" width="4.0" height="16.8" fill="#3a3a3a" />
<rect x="1014.5" y="1364.6" width="5.0" height="49.4" fill="#3a3a3a" opacity="0.62"/>
<rect x="1014.5" y="1388.0" width="5.0" height="26.0" fill="#3a3a3a" />
<rect x="1020.5" y="1318.0" width="3.0" height="96.0" fill="#3a3a3a" />
<rect x="1024.5" y="1318.0" width="8.0" height="96.0" fill="#3a3a3a" />
<rect x="1033.5" y="1318.0" width="4.0" height="96.0" fill="#3a3a3a" />
<rect x="1038.5" y="1318.0" width="3.0" height="96.0" fill="#3a3a3a" opacity="0.36"/>
<rect x="1043.5" y="1318.0" width="3.0" height="96.0" fill="#3a3a3a" />
<rect x="1060.9" y="1318.0" width="8.0" height="96.0" fill="#3a3a3a" opacity="0.62"/>
<rect x="1060.9" y="1377.3" width="8.0" height="36.7" fill="#3a3a3a" />
<rect x="1069.9" y="1322.3" width="3.0" height="91.7" fill="#3a3a3a" opacity="0.36"/>
<rect x="1074.9" y="1328.8" width="3.0" height="85.2" fill="#3a3a3a" />
<rect x="1077.9" y="1318.0" width="5.0" height="96.0" fill="#3a3a3a" opacity="0.62"/>
<rect x="1077.9" y="1375.6" width="5.0" height="38.4" fill="#3a3a3a" />
<rect x="1084.9" y="1318.0" width="4.0" height="96.0" fill="#3a3a3a" />
<rect x="1089.9" y="1318.0" width="6.0" height="96.0" fill="#3a3a3a" opacity="0.62"/>
<rect x="1105.5" y="1339.9" width="4.0" height="74.1" fill="#3a3a3a" opacity="0.62"/>
<rect x="1109.5" y="1318.0" width="3.0" height="96.0" fill="#3a3a3a" opacity="0.62"/>
<rect x="1109.5" y="1377.1" width="3.0" height="36.9" fill="#3a3a3a" />
<rect x="1113.5" y="1318.0" width="4.0" height="96.0" fill="#3a3a3a" opacity="0.36"/>
<rect x="1113.5" y="1374.1" width="4.0" height="39.9" fill="#3a3a3a" />
<rect x="1129.9" y="1318.0" width="8.0" height="96.0" fill="#3a3a3a" opacity="0.62"/>
<rect x="1129.9" y="1362.2" width="8.0" height="51.8" fill="#3a3a3a" />
<rect x="1139.9" y="1318.0" width="4.0" height="96.0" fill="#3a3a3a" opacity="0.62"/>
<rect x="1143.9" y="1318.0" width="5.0" height="96.0" fill="#3a3a3a" opacity="0.36"/>
<rect x="1143.9" y="1385.1" width="5.0" height="28.9" fill="#3a3a3a" />
<rect x="1150.9" y="1351.8" width="3.0" height="62.2" fill="#3a3a3a" opacity="0.36"/>
<rect x="1153.9" y="1338.7" width="3.0" height="75.3" fill="#3a3a3a" />
<rect x="1158.9" y="1365.2" width="3.0" height="48.8" fill="#3a3a3a" opacity="0.36"/>
<rect x="1158.9" y="1400.5" width="3.0" height="13.5" fill="#3a3a3a" />
<rect x="1163.9" y="1318.0" width="4.0" height="96.0" fill="#3a3a3a" opacity="0.62"/>
<rect x="1163.9" y="1385.5" width="4.0" height="28.5" fill="#3a3a3a" />
<rect x="1168.9" y="1325.3" width="5.0" height="88.7" fill="#3a3a3a" opacity="0.62"/>
<rect x="1175.9" y="1369.4" width="3.0" height="44.6" fill="#3a3a3a" opacity="0.36"/>
<rect x="1178.9" y="1330.3" width="4.0" height="83.7" fill="#3a3a3a" />
<rect x="1185.9" y="1345.5" width="4.0" height="68.5" fill="#3a3a3a" opacity="0.62"/>
<rect x="1190.9" y="1318.0" width="6.0" height="96.0" fill="#3a3a3a" opacity="0.36"/>
<rect x="1198.9" y="1326.3" width="6.0" height="87.7" fill="#3a3a3a" opacity="0.62"/>
<rect x="1206.9" y="1318.0" width="4.0" height="96.0" fill="#3a3a3a" />
<rect x="1218.4" y="1344.2" width="4.0" height="69.8" fill="#3a3a3a" opacity="0.36"/>
<rect x="1228.2" y="1324.6" width="6.0" height="89.4" fill="#3a3a3a" opacity="0.36"/>
<rect x="1228.2" y="1380.5" width="6.0" height="33.5" fill="#3a3a3a" />
<rect x="1234.2" y="1367.4" width="3.0" height="46.6" fill="#3a3a3a" opacity="0.36"/>
<rect x="1238.2" y="1339.5" width="3.0" height="74.5" fill="#3a3a3a" opacity="0.36"/>
<rect x="1243.2" y="1318.0" width="4.0" height="96.0" fill="#3a3a3a" />
<rect x="1248.2" y="1318.0" width="6.0" height="96.0" fill="#3a3a3a" opacity="0.62"/>
<rect x="1255.2" y="1318.0" width="6.0" height="96.0" fill="#3a3a3a" />
<rect x="1263.2" y="1318.0" width="8.0" height="96.0" fill="#3a3a3a" opacity="0.62"/>
<rect x="1273.2" y="1373.5" width="8.0" height="40.5" fill="#3a3a3a" opacity="0.62"/>
<rect x="1273.2" y="1397.8" width="8.0" height="16.2" fill="#3a3a3a" />
<rect x="1282.2" y="1357.1" width="4.0" height="56.9" fill="#3a3a3a" opacity="0.62"/>
<rect x="1282.2" y="1379.4" width="4.0" height="34.6" fill="#3a3a3a" />
<rect x="1286.2" y="1318.0" width="8.0" height="96.0" fill="#3a3a3a" />
<rect x="1295.2" y="1318.0" width="3.0" height="96.0" fill="#3a3a3a" opacity="0.62"/>
<rect x="1295.2" y="1366.3" width="3.0" height="47.7" fill="#3a3a3a" />
<rect x="1300.2" y="1348.6" width="3.0" height="65.4" fill="#3a3a3a" />
<rect x="1306.2" y="1318.0" width="4.0" height="96.0" fill="#3a3a3a" opacity="0.62"/>
<rect x="1306.2" y="1355.8" width="4.0" height="58.2" fill="#3a3a3a" />
<rect x="1312.2" y="1327.7" width="3.0" height="86.3" fill="#3a3a3a" opacity="0.62"/>
<rect x="1312.2" y="1374.2" width="3.0" height="39.8" fill="#3a3a3a" />
<rect x="1316.2" y="1318.0" width="6.0" height="96.0" fill="#3a3a3a" />
<rect x="1323.2" y="1318.0" width="3.0" height="96.0" fill="#3a3a3a" opacity="0.62"/>
<rect x="1323.2" y="1353.9" width="3.0" height="60.1" fill="#3a3a3a" />
<rect x="1329.2" y="1347.3" width="3.0" height="66.7" fill="#3a3a3a" opacity="0.62"/>
<rect x="1334.2" y="1318.0" width="4.0" height="96.0" fill="#3a3a3a" opacity="0.36"/>
<rect x="1334.2" y="1382.6" width="4.0" height="31.4" fill="#3a3a3a" />
<rect x="1340.2" y="1362.3" width="8.0" height="51.7" fill="#3a3a3a" opacity="0.62"/>
<rect x="1340.2" y="1399.0" width="8.0" height="15.0" fill="#3a3a3a" />
<rect x="1349.2" y="1334.7" width="3.8" height="79.3" fill="#3a3a3a" />
<rect x="850.0" y="1414.0" width="4.0" height="77.6" fill="#3a3a3a" />
<rect x="856.0" y="1414.0" width="5.0" height="32.5" fill="#3a3a3a" />
<rect x="862.0" y="1414.0" width="3.0" height="96.0" fill="#3a3a3a" opacity="0.62"/>
<rect x="865.0" y="1414.0" width="3.0" height="74.5" fill="#3a3a3a" opacity="0.62"/>
<rect x="876.2" y="1414.0" width="8.0" height="55.1" fill="#3a3a3a" opacity="0.62"/>
<rect x="876.2" y="1414.0" width="8.0" height="24.2" fill="#3a3a3a" />
<rect x="886.2" y="1414.0" width="6.0" height="71.6" fill="#3a3a3a" opacity="0.62"/>
<rect x="886.2" y="1414.0" width="6.0" height="39.7" fill="#3a3a3a" />
<rect x="892.2" y="1414.0" width="4.0" height="53.1" fill="#3a3a3a" opacity="0.62"/>
<rect x="896.2" y="1414.0" width="4.0" height="96.0" fill="#3a3a3a" opacity="0.62"/>
<rect x="896.2" y="1414.0" width="4.0" height="54.9" fill="#3a3a3a" />
<rect x="901.2" y="1414.0" width="3.0" height="96.0" fill="#3a3a3a" opacity="0.62"/>
<rect x="901.2" y="1414.0" width="3.0" height="50.3" fill="#3a3a3a" />
<rect x="906.2" y="1414.0" width="3.0" height="96.0" fill="#3a3a3a" />
<rect x="911.2" y="1414.0" width="5.0" height="48.4" fill="#3a3a3a" />
<rect x="917.2" y="1414.0" width="8.0" height="91.2" fill="#3a3a3a" />
<rect x="927.2" y="1414.0" width="5.0" height="96.0" fill="#3a3a3a" />
<rect x="940.4" y="1414.0" width="4.0" height="96.0" fill="#3a3a3a" opacity="0.62"/>
<rect x="946.4" y="1414.0" width="3.0" height="71.6" fill="#3a3a3a" opacity="0.36"/>
<rect x="950.4" y="1414.0" width="3.0" height="96.0" fill="#3a3a3a" opacity="0.36"/>
<rect x="950.4" y="1414.0" width="3.0" height="27.7" fill="#3a3a3a" />
<rect x="954.4" y="1414.0" width="6.0" height="76.7" fill="#3a3a3a" />
<rect x="961.4" y="1414.0" width="3.0" height="96.0" fill="#3a3a3a" />
<rect x="966.4" y="1414.0" width="4.0" height="60.3" fill="#3a3a3a" opacity="0.62"/>
<rect x="966.4" y="1414.0" width="4.0" height="38.2" fill="#3a3a3a" />
<rect x="973.4" y="1414.0" width="8.0" height="96.0" fill="#3a3a3a" />
<rect x="981.4" y="1414.0" width="6.0" height="74.3" fill="#3a3a3a" opacity="0.62"/>
<rect x="981.4" y="1414.0" width="6.0" height="44.3" fill="#3a3a3a" />
<rect x="989.4" y="1414.0" width="5.0" height="96.0" fill="#3a3a3a" opacity="0.62"/>
<rect x="989.4" y="1414.0" width="5.0" height="66.9" fill="#3a3a3a" />
<rect x="996.4" y="1414.0" width="3.0" height="96.0" fill="#3a3a3a" />
<rect x="1001.4" y="1414.0" width="4.0" height="62.7" fill="#3a3a3a" />
<rect x="1005.4" y="1414.0" width="4.0" height="96.0" fill="#3a3a3a" />
<rect x="1013.5" y="1414.0" width="6.0" height="96.0" fill="#3a3a3a" opacity="0.36"/>
<rect x="1013.5" y="1414.0" width="6.0" height="49.2" fill="#3a3a3a" />
<rect x="1022.5" y="1414.0" width="8.0" height="30.7" fill="#3a3a3a" opacity="0.36"/>
<rect x="1022.5" y="1414.0" width="8.0" height="14.0" fill="#3a3a3a" />
<rect x="1041.4" y="1414.0" width="4.0" height="96.0" fill="#3a3a3a" opacity="0.62"/>
<rect x="1047.4" y="1414.0" width="6.0" height="64.8" fill="#3a3a3a" opacity="0.62"/>
<rect x="1047.4" y="1414.0" width="6.0" height="38.5" fill="#3a3a3a" />
<rect x="1056.4" y="1414.0" width="5.0" height="96.0" fill="#3a3a3a" />
<rect x="1063.4" y="1414.0" width="3.0" height="96.0" fill="#3a3a3a" />
<rect x="1068.4" y="1414.0" width="4.0" height="71.4" fill="#3a3a3a" opacity="0.62"/>
<rect x="1068.4" y="1414.0" width="4.0" height="25.4" fill="#3a3a3a" />
<rect x="1075.4" y="1414.0" width="4.0" height="84.4" fill="#3a3a3a" opacity="0.62"/>
<rect x="1075.4" y="1414.0" width="4.0" height="22.3" fill="#3a3a3a" />
<rect x="1081.4" y="1414.0" width="6.0" height="96.0" fill="#3a3a3a" opacity="0.36"/>
<rect x="1081.4" y="1414.0" width="6.0" height="53.0" fill="#3a3a3a" />
<rect x="1102.8" y="1414.0" width="3.0" height="96.0" fill="#3a3a3a" />
<rect x="1112.3" y="1414.0" width="3.0" height="79.1" fill="#3a3a3a" />
<rect x="1116.3" y="1414.0" width="4.0" height="66.8" fill="#3a3a3a" />
<rect x="1122.3" y="1414.0" width="6.0" height="69.1" fill="#3a3a3a" opacity="0.36"/>
<rect x="1122.3" y="1414.0" width="6.0" height="38.1" fill="#3a3a3a" />
<rect x="1131.3" y="1414.0" width="4.0" height="96.0" fill="#3a3a3a" opacity="0.62"/>
<rect x="1131.3" y="1414.0" width="4.0" height="56.9" fill="#3a3a3a" />
<rect x="1137.3" y="1414.0" width="6.0" height="96.0" fill="#3a3a3a" opacity="0.62"/>
<rect x="1145.3" y="1414.0" width="3.0" height="96.0" fill="#3a3a3a" opacity="0.62"/>
<rect x="1145.3" y="1414.0" width="3.0" height="61.4" fill="#3a3a3a" />
<rect x="1151.3" y="1414.0" width="6.0" height="96.0" fill="#3a3a3a" opacity="0.62"/>
<rect x="1159.3" y="1414.0" width="6.0" height="78.0" fill="#3a3a3a" opacity="0.62"/>
<rect x="1165.3" y="1414.0" width="4.0" height="36.2" fill="#3a3a3a" opacity="0.62"/>
<rect x="1165.3" y="1414.0" width="4.0" height="12.9" fill="#3a3a3a" />
<rect x="1169.3" y="1414.0" width="3.0" height="96.0" fill="#3a3a3a" opacity="0.36"/>
<rect x="1169.3" y="1414.0" width="3.0" height="25.2" fill="#3a3a3a" />
<rect x="1176.4" y="1414.0" width="4.0" height="96.0" fill="#3a3a3a" />
<rect x="1180.4" y="1414.0" width="6.0" height="96.0" fill="#3a3a3a" opacity="0.62"/>
<rect x="1199.5" y="1414.0" width="8.0" height="61.2" fill="#3a3a3a" opacity="0.36"/>
<rect x="1208.5" y="1414.0" width="6.0" height="38.4" fill="#3a3a3a" opacity="0.36"/>
<rect x="1215.5" y="1414.0" width="5.0" height="67.3" fill="#3a3a3a" opacity="0.36"/>
<rect x="1222.5" y="1414.0" width="8.0" height="61.6" fill="#3a3a3a" opacity="0.36"/>
<rect x="1222.5" y="1414.0" width="8.0" height="46.2" fill="#3a3a3a" />
<rect x="1231.5" y="1414.0" width="5.0" height="90.5" fill="#3a3a3a" opacity="0.36"/>
<rect x="1242.3" y="1414.0" width="5.0" height="49.4" fill="#3a3a3a" />
<rect x="1248.3" y="1414.0" width="5.0" height="96.0" fill="#3a3a3a" opacity="0.36"/>
<rect x="1255.3" y="1414.0" width="6.0" height="79.0" fill="#3a3a3a" />
<rect x="1263.3" y="1414.0" width="3.0" height="96.0" fill="#3a3a3a" opacity="0.62"/>
<rect x="1267.3" y="1414.0" width="6.0" height="37.4" fill="#3a3a3a" />
<rect x="1276.3" y="1414.0" width="4.0" height="47.0" fill="#3a3a3a" />
<rect x="1283.3" y="1414.0" width="4.0" height="96.0" fill="#3a3a3a" opacity="0.36"/>
<rect x="1287.3" y="1414.0" width="6.0" height="96.0" fill="#3a3a3a" />
<rect x="1296.3" y="1414.0" width="4.0" height="96.0" fill="#3a3a3a" />
<rect x="1302.3" y="1414.0" width="8.0" height="96.0" fill="#3a3a3a" opacity="0.62"/>
<rect x="1302.3" y="1414.0" width="8.0" height="39.0" fill="#3a3a3a" />
<rect x="1312.3" y="1414.0" width="3.0" height="96.0" fill="#3a3a3a" />
<rect x="2141.7" y="1376.8" width="6.7" height="37.1" fill="#3a3a3a" opacity="0.6"/>
<rect x="2146.7" y="1343.4" width="6.7" height="70.5" fill="#3a3a3a" opacity="0.36"/>
<rect x="2151.8" y="1371.8" width="6.7" height="42.1" fill="#3a3a3a" />
<rect x="2165.1" y="1348.4" width="5.0" height="65.4" fill="#3a3a3a" opacity="0.36"/>
<rect x="2176.1" y="1318.0" width="5.7" height="95.8" fill="#3a3a3a" opacity="0.4"/>
<rect x="2176.8" y="1336.7" width="4.7" height="77.1" fill="#3a3a3a" opacity="0.8"/>
<rect x="2187.5" y="1320.1" width="6.7" height="93.8" fill="#3a3a3a" />
<rect x="2200.2" y="1326.7" width="6.7" height="87.1" fill="#3a3a3a" opacity="0.55"/>
<rect x="2200.2" y="1355.1" width="6.7" height="58.8" fill="#3a3a3a" />
<rect x="2212.9" y="1330.1" width="6.7" height="83.8" fill="#3a3a3a" opacity="0.6"/>
<rect x="2213.5" y="1380.2" width="6.0" height="33.7" fill="#3a3a3a" />
<rect x="2226.9" y="1348.4" width="4.0" height="65.4" fill="#3a3a3a" opacity="0.36"/>
<rect x="2230.2" y="1318.0" width="6.0" height="95.8" fill="#3a3a3a" opacity="0.75"/>
<rect x="2246.9" y="1318.0" width="5.0" height="95.8" fill="#3a3a3a" opacity="0.36"/>
<rect x="2269.6" y="1318.0" width="4.0" height="95.8" fill="#3a3a3a" opacity="0.36"/>
<rect x="2278.0" y="1336.7" width="6.3" height="77.1" fill="#3a3a3a" opacity="0.7"/>
<rect x="2279.0" y="1380.2" width="4.7" height="33.7" fill="#3a3a3a" />
<rect x="2288.6" y="1366.8" width="4.3" height="47.1" fill="#3a3a3a" opacity="0.6"/>
<rect x="2292.0" y="1318.0" width="7.3" height="95.8" fill="#3a3a3a" />
<rect x="2300.3" y="1318.0" width="6.0" height="95.8" fill="#3a3a3a" opacity="0.45"/>
<rect x="2306.3" y="1323.4" width="7.3" height="90.5" fill="#3a3a3a" opacity="0.6"/>
<rect x="2300.3" y="1373.5" width="13.4" height="40.4" fill="#3a3a3a" />
<rect x="2314.4" y="1346.8" width="4.3" height="67.1" fill="#3a3a3a" opacity="0.4"/>
<rect x="2318.7" y="1318.0" width="11.7" height="95.8" fill="#3a3a3a" opacity="0.6"/>
<rect x="2318.7" y="1361.8" width="11.7" height="52.1" fill="#3a3a3a" />
<rect x="2330.4" y="1326.7" width="10.0" height="87.1" fill="#3a3a3a" opacity="0.6"/>
<rect x="2332.1" y="1396.8" width="9.0" height="17.0" fill="#3a3a3a" />
<rect x="2348.7" y="1326.7" width="5.7" height="87.1" fill="#3a3a3a" opacity="0.4"/>
<rect x="2353.8" y="1318.0" width="8.3" height="95.8" fill="#3a3a3a" opacity="0.5"/>
<rect x="2355.4" y="1360.1" width="11.7" height="53.8" fill="#3a3a3a" opacity="0.6"/>
<rect x="2363.8" y="1318.0" width="5.3" height="95.8" fill="#3a3a3a" opacity="0.36"/>
<rect x="2373.8" y="1318.0" width="8.3" height="95.8" fill="#3a3a3a" />
<rect x="2383.1" y="1318.0" width="4.7" height="95.8" fill="#3a3a3a" opacity="0.36"/>
<rect x="2387.1" y="1366.8" width="6.7" height="47.1" fill="#3a3a3a" />
<rect x="2393.8" y="1346.8" width="8.3" height="67.1" fill="#3a3a3a" />
<rect x="2401.5" y="1326.7" width="6.3" height="87.1" fill="#3a3a3a" />
<rect x="2407.2" y="1386.8" width="6.7" height="27.0" fill="#3a3a3a" />
<rect x="2388.8" y="1318.0" width="11.7" height="28.7" fill="#3a3a3a" opacity="0.36"/>
<rect x="2413.9" y="1326.7" width="6.7" height="87.1" fill="#3a3a3a" opacity="0.6"/>
<rect x="2422.2" y="1318.0" width="8.3" height="95.8" fill="#3a3a3a" />
<rect x="2433.9" y="1326.7" width="6.7" height="87.1" fill="#3a3a3a" opacity="0.9"/>
<rect x="2439.9" y="1386.8" width="7.3" height="27.0" fill="#3a3a3a" />
<rect x="2435.6" y="1318.0" width="11.7" height="68.8" fill="#3a3a3a" opacity="0.36"/>
<rect x="2447.2" y="1318.0" width="7.3" height="95.8" fill="#3a3a3a" opacity="0.36"/>
<rect x="2455.6" y="1318.0" width="6.7" height="95.8" fill="#3a3a3a" opacity="0.5"/>
<rect x="2465.6" y="1380.2" width="15.0" height="33.7" fill="#3a3a3a" opacity="0.45"/>
<rect x="2471.3" y="1318.0" width="9.3" height="62.1" fill="#3a3a3a" opacity="0.36"/>
<rect x="2484.0" y="1333.4" width="8.3" height="80.5" fill="#3a3a3a" opacity="0.4"/>
<rect x="2492.3" y="1366.8" width="10.0" height="47.1" fill="#3a3a3a" />
<rect x="2500.7" y="1343.4" width="7.3" height="70.5" fill="#3a3a3a" />
<rect x="2506.7" y="1320.1" width="8.0" height="93.8" fill="#3a3a3a" />
<rect x="2494.0" y="1333.4" width="6.7" height="33.4" fill="#3a3a3a" opacity="0.5"/>
<rect x="2527.4" y="1333.4" width="6.7" height="80.5" fill="#3a3a3a" opacity="0.6"/>
<rect x="2534.1" y="1330.1" width="5.3" height="83.8" fill="#3a3a3a" opacity="0.36"/>
<rect x="2540.1" y="1326.7" width="5.7" height="87.1" fill="#3a3a3a" />
<rect x="2547.4" y="1366.8" width="6.7" height="47.1" fill="#3a3a3a" opacity="0.6"/>
<rect x="2550.8" y="1331.7" width="10.0" height="82.1" fill="#3a3a3a" opacity="0.4"/>
<rect x="2554.1" y="1380.2" width="6.7" height="33.7" fill="#3a3a3a" opacity="0.8"/>
<rect x="2144.4" y="1413.9" width="5.7" height="94.8" fill="#3a3a3a" opacity="0.6"/>
<rect x="2150.1" y="1413.9" width="6.7" height="64.8" fill="#3a3a3a" />
<rect x="2185.1" y="1413.9" width="10.0" height="94.8" fill="#3a3a3a" />
<rect x="2201.8" y="1413.9" width="5.0" height="94.8" fill="#3a3a3a" opacity="0.36"/>
<rect x="2213.5" y="1413.9" width="4.0" height="94.8" fill="#3a3a3a" opacity="0.36"/>
<rect x="2223.5" y="1413.9" width="6.7" height="94.8" fill="#3a3a3a" opacity="0.6"/>
<rect x="2231.9" y="1413.9" width="6.7" height="63.1" fill="#3a3a3a" opacity="0.36"/>
<rect x="2238.6" y="1413.9" width="10.0" height="73.1" fill="#3a3a3a" opacity="0.55"/>
<rect x="2248.6" y="1413.9" width="5.0" height="94.8" fill="#3a3a3a" opacity="0.36"/>
<rect x="2260.3" y="1413.9" width="6.7" height="76.5" fill="#3a3a3a" />
<rect x="2266.3" y="1413.9" width="7.3" height="94.8" fill="#3a3a3a" />
<rect x="2278.6" y="1413.9" width="6.7" height="43.1" fill="#3a3a3a" opacity="0.6"/>
<rect x="2290.3" y="1413.9" width="6.7" height="94.8" fill="#3a3a3a" />
<rect x="2297.0" y="1413.9" width="7.3" height="94.8" fill="#3a3a3a" opacity="0.4"/>
<rect x="2305.3" y="1413.9" width="8.3" height="94.8" fill="#3a3a3a" opacity="0.6"/>
<rect x="2318.7" y="1413.9" width="8.3" height="63.1" fill="#3a3a3a" />
<rect x="2319.7" y="1477.0" width="7.3" height="31.7" fill="#3a3a3a" opacity="0.55"/>
<rect x="2327.0" y="1413.9" width="8.3" height="94.8" fill="#3a3a3a" opacity="0.36"/>
<rect x="2372.1" y="1413.9" width="10.0" height="94.8" fill="#3a3a3a" opacity="0.36"/>
<rect x="2383.8" y="1413.9" width="10.0" height="16.4" fill="#3a3a3a" />
<rect x="2385.5" y="1430.2" width="8.3" height="60.1" fill="#3a3a3a" opacity="0.6"/>
<rect x="2393.8" y="1413.9" width="13.4" height="89.8" fill="#3a3a3a" opacity="0.4"/>
<rect x="2400.5" y="1413.9" width="5.0" height="63.1" fill="#3a3a3a" opacity="0.7"/>
<rect x="2407.2" y="1413.9" width="6.7" height="49.7" fill="#3a3a3a" opacity="0.6"/>
<rect x="2420.5" y="1413.9" width="11.7" height="94.8" fill="#3a3a3a" />
<rect x="2433.9" y="1413.9" width="6.7" height="89.8" fill="#3a3a3a" opacity="0.36"/>
<rect x="2440.6" y="1413.9" width="8.3" height="29.7" fill="#3a3a3a" />
<rect x="2447.2" y="1413.9" width="15.0" height="94.8" fill="#3a3a3a" />
<rect x="2441.2" y="1443.6" width="6.0" height="33.4" fill="#3a3a3a" opacity="0.5"/>
<rect x="2479.0" y="1413.9" width="5.0" height="94.8" fill="#3a3a3a" opacity="0.36"/>
<rect x="2482.3" y="1413.9" width="6.7" height="39.7" fill="#3a3a3a" />
<rect x="2490.7" y="1413.9" width="5.0" height="79.8" fill="#3a3a3a" opacity="0.36"/>
<rect x="2508.0" y="1413.9" width="6.0" height="94.8" fill="#3a3a3a" />
<rect x="2520.0" y="1413.9" width="20.7" height="89.8" fill="#3a3a3a" />
<rect x="2521.4" y="1503.7" width="12.7" height="5.0" fill="#3a3a3a" opacity="0.8"/>
<rect x="2545.7" y="1413.9" width="8.3" height="36.4" fill="#3a3a3a" />
<rect x="2552.4" y="1413.9" width="8.3" height="19.7" fill="#3a3a3a" />
<rect x="2546.7" y="1450.3" width="4.7" height="20.0" fill="#3a3a3a" opacity="0.5"/>
<rect x="491.5" y="1318.0" width="5.0" height="172.0" fill="#3a3a3a" />
<rect x="1576.4" y="1318.0" width="3.3" height="95.8" fill="#3a3a3a" opacity="0.6"/>
<rect x="1572.1" y="1350.1" width="4.3" height="63.8" fill="#3a3a3a" opacity="0.55"/>
<rect x="1572.7" y="1413.9" width="5.0" height="94.8" fill="#3a3a3a" />
<rect x="1584.4" y="1413.9" width="3.3" height="38.1" fill="#3a3a3a" opacity="0.35"/>
<rect x="1835.2" y="1336.7" width="4.7" height="172.0" fill="#3a3a3a" opacity="0.5"/>
<rect x="1841.8" y="1358.4" width="3.7" height="150.3" fill="#3a3a3a" opacity="0.35"/>
<rect x="1855.9" y="1340.1" width="6.7" height="168.6" fill="#3a3a3a" opacity="0.65"/>
<rect x="1946.3" y="1413.9" width="4.0" height="39.7" fill="#3a3a3a" opacity="0.6"/>
<rect x="1949.7" y="1378.5" width="4.0" height="35.4" fill="#3a3a3a" opacity="0.55"/>
<rect x="1951.7" y="1395.2" width="3.3" height="18.7" fill="#3a3a3a" />
<rect x="1967.7" y="1348.4" width="13.4" height="160.3" fill="#3a3a3a" />
<rect x="1973.7" y="1331.7" width="4.7" height="16.7" fill="#3a3a3a" opacity="0.9"/>
<rect x="1981.1" y="1340.1" width="8.3" height="73.8" fill="#3a3a3a" opacity="0.5"/>
<rect x="1981.1" y="1413.9" width="8.3" height="94.8" fill="#3a3a3a" opacity="0.55"/>
<rect x="1984.4" y="1396.8" width="6.7" height="53.4" fill="#3a3a3a" />
<rect x="1989.4" y="1323.4" width="10.0" height="90.5" fill="#3a3a3a" />
<rect x="1989.4" y="1413.9" width="10.0" height="94.8" fill="#3a3a3a" opacity="0.6"/>
<rect x="1999.4" y="1318.0" width="10.0" height="95.8" fill="#3a3a3a" opacity="0.6"/>
<rect x="1999.4" y="1380.2" width="10.0" height="33.7" fill="#3a3a3a" />
<rect x="1999.4" y="1413.9" width="8.3" height="76.5" fill="#3a3a3a" />
<rect x="2013.5" y="1413.9" width="4.3" height="76.5" fill="#3a3a3a" opacity="0.6"/>
<rect x="2874.0" y="1413.9" width="4.7" height="81.5" fill="#3a3a3a" opacity="0.4"/>
<rect x="3048.9" y="1413.9" width="4.0" height="43.1" fill="#3a3a3a" opacity="0.35"/>
<rect x="3061.2" y="1326.7" width="7.3" height="87.1" fill="#3a3a3a" opacity="0.55"/>
<rect x="3061.9" y="1345.1" width="6.0" height="68.8" fill="#3a3a3a" />
<rect x="3061.2" y="1413.9" width="7.3" height="94.8" fill="#3a3a3a" opacity="0.55"/>
<rect x="3312.7" y="1353.4" width="4.0" height="60.4" fill="#3a3a3a" opacity="0.4"/>
<rect x="3316.0" y="1413.9" width="4.3" height="73.1" fill="#3a3a3a" opacity="0.35"/>
<rect x="3320.0" y="1326.7" width="11.7" height="87.1" fill="#3a3a3a" />
<rect x="3325.0" y="1318.0" width="6.0" height="8.7" fill="#3a3a3a" />
<rect x="3323.3" y="1413.9" width="7.0" height="93.2" fill="#3a3a3a" />
<rect x="3336.0" y="1318.0" width="4.0" height="95.8" fill="#3a3a3a" opacity="0.55"/>
<rect x="3336.7" y="1413.9" width="4.3" height="74.8" fill="#3a3a3a" opacity="0.55"/>
<rect x="3336.7" y="1413.9" width="3.7" height="16.4" fill="#3a3a3a" />
<rect x="3347.7" y="1413.9" width="5.7" height="86.5" fill="#3a3a3a" opacity="0.35"/>
<rect x="3356.7" y="1413.9" width="5.0" height="88.1" fill="#3a3a3a" opacity="0.7"/>
<rect x="3375.1" y="1351.8" width="8.3" height="62.1" fill="#3a3a3a" />
<rect x="3377.8" y="1318.0" width="3.3" height="33.7" fill="#3a3a3a" opacity="0.35"/>
<rect x="3375.8" y="1413.9" width="8.7" height="79.8" fill="#3a3a3a" />
<rect x="3390.1" y="1350.1" width="6.7" height="63.8" fill="#3a3a3a" />
<rect x="3391.1" y="1318.0" width="2.7" height="32.1" fill="#3a3a3a" opacity="0.4"/>
<rect x="3386.8" y="1413.9" width="16.7" height="84.8" fill="#3a3a3a" opacity="0.3"/>
<rect x="3405.1" y="1346.8" width="10.0" height="67.1" fill="#3a3a3a" />
<rect x="3409.5" y="1323.4" width="5.7" height="23.4" fill="#3a3a3a" />
<rect x="3406.8" y="1413.9" width="10.0" height="43.1" fill="#3a3a3a" />
<rect x="3409.1" y="1456.9" width="7.7" height="46.7" fill="#3a3a3a" opacity="0.55"/>
<rect x="3416.8" y="1326.7" width="15.0" height="87.1" fill="#3a3a3a" opacity="0.6"/>
<rect x="3418.5" y="1413.9" width="18.4" height="79.8" fill="#3a3a3a" opacity="0.6"/>
<rect x="3425.2" y="1318.0" width="8.3" height="8.7" fill="#3a3a3a" opacity="0.35"/>
<rect x="3437.9" y="1318.0" width="5.7" height="95.8" fill="#3a3a3a" opacity="0.75"/>
<rect x="3436.9" y="1413.9" width="6.7" height="94.8" fill="#3a3a3a" />
<rect x="491.0" y="1550.5" width="3.0" height="96.0" fill="#00e2e2" />
<rect x="499.8" y="1550.5" width="3.0" height="96.0" fill="#00e2e2" />
<rect x="508.3" y="1550.5" width="3.0" height="96.0" fill="#00e2e2" />
<rect x="514.3" y="1565.9" width="3.0" height="80.6" fill="#00e2e2" opacity="0.55"/>
<rect x="517.3" y="1550.5" width="5.0" height="96.0" fill="#00e2e2" />
<rect x="522.3" y="1550.5" width="3.0" height="96.0" fill="#00e2e2" />
<rect x="526.3" y="1550.5" width="3.0" height="96.0" fill="#00e2e2" opacity="0.55"/>
<rect x="526.3" y="1590.6" width="3.0" height="55.9" fill="#00e2e2" />
<rect x="530.3" y="1550.5" width="4.0" height="96.0" fill="#00e2e2" opacity="0.3"/>
<rect x="534.3" y="1550.5" width="3.0" height="96.0" fill="#00e2e2" opacity="0.55"/>
<rect x="534.3" y="1578.2" width="3.0" height="68.3" fill="#00e2e2" />
<rect x="539.3" y="1584.0" width="6.0" height="62.5" fill="#00e2e2" />
<rect x="546.3" y="1607.0" width="6.0" height="39.5" fill="#00e2e2" opacity="0.55"/>
<rect x="546.3" y="1635.2" width="6.0" height="11.3" fill="#00e2e2" />
<rect x="554.3" y="1550.5" width="4.0" height="96.0" fill="#00e2e2" opacity="0.3"/>
<rect x="554.3" y="1590.4" width="4.0" height="56.1" fill="#00e2e2" />
<rect x="561.3" y="1550.5" width="5.0" height="96.0" fill="#00e2e2" opacity="0.3"/>
<rect x="566.3" y="1606.0" width="3.0" height="40.5" fill="#00e2e2" opacity="0.55"/>
<rect x="566.3" y="1622.5" width="3.0" height="24.0" fill="#00e2e2" />
<rect x="572.3" y="1553.1" width="4.0" height="93.4" fill="#00e2e2" opacity="0.3"/>
<rect x="572.3" y="1607.0" width="4.0" height="39.5" fill="#00e2e2" />
<rect x="578.3" y="1601.2" width="6.0" height="45.3" fill="#00e2e2" opacity="0.3"/>
<rect x="578.3" y="1616.9" width="6.0" height="29.6" fill="#00e2e2" />
<rect x="587.3" y="1550.5" width="8.0" height="96.0" fill="#00e2e2" />
<rect x="598.3" y="1550.5" width="4.0" height="96.0" fill="#00e2e2" opacity="0.55"/>
<rect x="598.3" y="1606.3" width="4.0" height="40.2" fill="#00e2e2" />
<rect x="602.3" y="1550.5" width="3.0" height="96.0" fill="#00e2e2" />
<rect x="605.3" y="1550.5" width="8.0" height="96.0" fill="#00e2e2" />
<rect x="613.3" y="1550.5" width="5.0" height="96.0" fill="#00e2e2" opacity="0.3"/>
<rect x="619.3" y="1550.5" width="4.0" height="96.0" fill="#00e2e2" />
<rect x="626.3" y="1550.5" width="3.0" height="96.0" fill="#00e2e2" />
<rect x="630.3" y="1578.4" width="5.0" height="68.1" fill="#00e2e2" />
<rect x="638.3" y="1608.4" width="6.0" height="38.1" fill="#00e2e2" />
<rect x="644.3" y="1550.5" width="6.0" height="96.0" fill="#00e2e2" opacity="0.55"/>
<rect x="650.3" y="1550.5" width="3.0" height="96.0" fill="#00e2e2" opacity="0.3"/>
<rect x="654.3" y="1550.5" width="8.0" height="96.0" fill="#00e2e2" />
<rect x="662.3" y="1550.5" width="6.0" height="96.0" fill="#00e2e2" />
<rect x="670.3" y="1550.5" width="3.0" height="96.0" fill="#00e2e2" opacity="0.55"/>
<rect x="674.3" y="1550.5" width="3.0" height="96.0" fill="#00e2e2" opacity="0.3"/>
<rect x="674.3" y="1620.5" width="3.0" height="26.0" fill="#00e2e2" />
<rect x="678.3" y="1597.9" width="3.0" height="48.6" fill="#00e2e2" opacity="0.3"/>
<rect x="682.3" y="1550.5" width="3.0" height="96.0" fill="#00e2e2" opacity="0.3"/>
<rect x="687.3" y="1550.5" width="4.0" height="96.0" fill="#00e2e2" opacity="0.3"/>
<rect x="687.3" y="1592.9" width="4.0" height="53.6" fill="#00e2e2" />
<rect x="692.3" y="1550.5" width="4.0" height="96.0" fill="#00e2e2" opacity="0.55"/>
<rect x="692.3" y="1618.8" width="4.0" height="27.7" fill="#00e2e2" />
<rect x="696.3" y="1572.0" width="8.0" height="74.5" fill="#00e2e2" opacity="0.55"/>
<rect x="696.3" y="1608.8" width="8.0" height="37.7" fill="#00e2e2" />
<rect x="705.3" y="1550.5" width="3.0" height="96.0" fill="#00e2e2" opacity="0.55"/>
<rect x="705.3" y="1609.3" width="3.0" height="37.2" fill="#00e2e2" />
<rect x="710.3" y="1550.5" width="6.0" height="96.0" fill="#00e2e2" />
<rect x="717.3" y="1550.5" width="6.0" height="96.0" fill="#00e2e2" />
<rect x="723.3" y="1550.5" width="8.0" height="96.0" fill="#00e2e2" opacity="0.3"/>
<rect x="732.3" y="1591.8" width="4.0" height="54.7" fill="#00e2e2" opacity="0.3"/>
<rect x="732.3" y="1618.5" width="4.0" height="28.0" fill="#00e2e2" />
<rect x="739.3" y="1550.5" width="3.0" height="96.0" fill="#00e2e2" opacity="0.55"/>
<rect x="742.3" y="1550.5" width="3.0" height="96.0" fill="#00e2e2" opacity="0.55"/>
<rect x="749.4" y="1550.5" width="6.0" height="96.0" fill="#00e2e2" opacity="0.3"/>
<rect x="764.3" y="1550.5" width="4.0" height="96.0" fill="#00e2e2" opacity="0.55"/>
<rect x="764.3" y="1603.7" width="4.0" height="42.8" fill="#00e2e2" />
<rect x="769.3" y="1550.5" width="6.0" height="96.0" fill="#00e2e2" />
<rect x="778.3" y="1550.5" width="6.0" height="96.0" fill="#00e2e2" />
<rect x="784.3" y="1570.4" width="5.0" height="76.1" fill="#00e2e2" />
<rect x="789.3" y="1550.5" width="3.0" height="96.0" fill="#00e2e2" opacity="0.55"/>
<rect x="789.3" y="1622.1" width="3.0" height="24.4" fill="#00e2e2" />
<rect x="794.3" y="1550.5" width="3.0" height="96.0" fill="#00e2e2" opacity="0.55"/>
<rect x="794.3" y="1622.4" width="3.0" height="24.1" fill="#00e2e2" />
<rect x="797.3" y="1588.7" width="3.0" height="57.8" fill="#00e2e2" />
<rect x="801.3" y="1601.3" width="4.0" height="45.2" fill="#00e2e2" opacity="0.3"/>
<rect x="807.3" y="1550.5" width="8.0" height="96.0" fill="#00e2e2" opacity="0.3"/>
<rect x="807.3" y="1601.6" width="8.0" height="44.9" fill="#00e2e2" />
<rect x="818.3" y="1550.5" width="4.0" height="96.0" fill="#00e2e2" opacity="0.3"/>
<rect x="824.3" y="1595.0" width="8.0" height="51.5" fill="#00e2e2" />
<rect x="832.3" y="1550.5" width="5.0" height="96.0" fill="#00e2e2" />
<rect x="837.3" y="1550.5" width="3.0" height="96.0" fill="#00e2e2" />
<rect x="841.3" y="1550.5" width="4.0" height="96.0" fill="#00e2e2" opacity="0.3"/>
<rect x="841.3" y="1589.8" width="4.0" height="56.7" fill="#00e2e2" />
<rect x="848.3" y="1550.5" width="6.0" height="96.0" fill="#00e2e2" />
<rect x="856.3" y="1550.5" width="4.0" height="96.0" fill="#00e2e2" opacity="0.3"/>
<rect x="856.3" y="1606.9" width="4.0" height="39.6" fill="#00e2e2" />
<rect x="860.3" y="1550.5" width="4.0" height="96.0" fill="#00e2e2" opacity="0.3"/>
<rect x="860.3" y="1592.3" width="4.0" height="54.2" fill="#00e2e2" />
<rect x="864.3" y="1550.5" width="3.0" height="96.0" fill="#00e2e2" />
<rect x="868.3" y="1550.5" width="3.0" height="96.0" fill="#00e2e2" />
<rect x="884.2" y="1550.5" width="5.0" height="96.0" fill="#00e2e2" opacity="0.3"/>
<rect x="884.2" y="1621.3" width="5.0" height="25.2" fill="#00e2e2" />
<rect x="890.2" y="1584.1" width="3.0" height="62.4" fill="#00e2e2" opacity="0.55"/>
<rect x="890.2" y="1599.7" width="3.0" height="46.8" fill="#00e2e2" />
<rect x="895.2" y="1550.5" width="4.0" height="96.0" fill="#00e2e2" />
<rect x="899.2" y="1550.5" width="0.8" height="96.0" fill="#00e2e2" opacity="0.3"/>
<rect x="491.0" y="1646.5" width="3.0" height="64.7" fill="#00e2e2" opacity="0.3"/>
<rect x="491.0" y="1646.5" width="3.0" height="29.4" fill="#00e2e2" />
<rect x="494.0" y="1646.5" width="3.0" height="77.2" fill="#00e2e2" opacity="0.55"/>
<rect x="500.0" y="1646.5" width="3.0" height="77.2" fill="#00e2e2" opacity="0.3"/>
<rect x="500.0" y="1646.5" width="3.0" height="47.6" fill="#00e2e2" />
<rect x="503.0" y="1646.5" width="5.0" height="77.2" fill="#00e2e2" opacity="0.55"/>
<rect x="503.0" y="1646.5" width="5.0" height="24.9" fill="#00e2e2" />
<rect x="508.0" y="1646.5" width="8.0" height="77.2" fill="#00e2e2" opacity="0.3"/>
<rect x="508.0" y="1646.5" width="8.0" height="42.0" fill="#00e2e2" />
<rect x="517.0" y="1646.5" width="5.0" height="77.2" fill="#00e2e2" opacity="0.55"/>
<rect x="522.0" y="1646.5" width="8.0" height="77.2" fill="#00e2e2" opacity="0.55"/>
<rect x="531.0" y="1646.5" width="3.0" height="77.2" fill="#00e2e2" />
<rect x="534.0" y="1646.5" width="6.0" height="77.2" fill="#00e2e2" />
<rect x="543.0" y="1646.5" width="5.0" height="36.5" fill="#00e2e2" />
<rect x="550.0" y="1646.5" width="5.0" height="77.2" fill="#00e2e2" />
<rect x="556.0" y="1646.5" width="4.0" height="77.2" fill="#00e2e2" />
<rect x="560.0" y="1646.5" width="3.0" height="77.2" fill="#00e2e2" />
<rect x="564.0" y="1646.5" width="3.0" height="77.2" fill="#00e2e2" />
<rect x="573.5" y="1646.5" width="6.0" height="77.2" fill="#00e2e2" />
<rect x="579.5" y="1646.5" width="3.0" height="77.2" fill="#00e2e2" />
<rect x="582.5" y="1646.5" width="4.0" height="70.2" fill="#00e2e2" />
<rect x="587.5" y="1646.5" width="3.0" height="77.2" fill="#00e2e2" />
<rect x="590.5" y="1646.5" width="3.0" height="77.2" fill="#00e2e2" opacity="0.3"/>
<rect x="590.5" y="1646.5" width="3.0" height="41.7" fill="#00e2e2" />
<rect x="594.5" y="1646.5" width="3.0" height="52.6" fill="#00e2e2" opacity="0.55"/>
<rect x="598.5" y="1646.5" width="5.0" height="77.2" fill="#00e2e2" opacity="0.3"/>
<rect x="606.5" y="1646.5" width="8.0" height="47.7" fill="#00e2e2" opacity="0.55"/>
<rect x="606.5" y="1646.5" width="8.0" height="33.0" fill="#00e2e2" />
<rect x="623.1" y="1646.5" width="4.0" height="77.2" fill="#00e2e2" opacity="0.55"/>
<rect x="623.1" y="1646.5" width="4.0" height="26.9" fill="#00e2e2" />
<rect x="627.1" y="1646.5" width="6.0" height="77.2" fill="#00e2e2" opacity="0.3"/>
<rect x="627.1" y="1646.5" width="6.0" height="25.9" fill="#00e2e2" />
<rect x="633.1" y="1646.5" width="5.0" height="77.2" fill="#00e2e2" />
<rect x="638.1" y="1646.5" width="3.0" height="77.2" fill="#00e2e2" />
<rect x="644.1" y="1646.5" width="3.0" height="28.8" fill="#00e2e2" />
<rect x="647.1" y="1646.5" width="3.0" height="77.2" fill="#00e2e2" opacity="0.3"/>
<rect x="647.1" y="1646.5" width="3.0" height="25.4" fill="#00e2e2" />
<rect x="650.1" y="1646.5" width="8.0" height="77.2" fill="#00e2e2" />
<rect x="658.1" y="1646.5" width="3.0" height="77.2" fill="#00e2e2" />
<rect x="661.1" y="1646.5" width="5.0" height="57.0" fill="#00e2e2" />
<rect x="668.1" y="1646.5" width="3.0" height="42.4" fill="#00e2e2" opacity="0.55"/>
<rect x="668.1" y="1646.5" width="3.0" height="12.6" fill="#00e2e2" />
<rect x="671.1" y="1646.5" width="6.0" height="47.4" fill="#00e2e2" opacity="0.3"/>
<rect x="671.1" y="1646.5" width="6.0" height="31.7" fill="#00e2e2" />
<rect x="680.1" y="1646.5" width="4.0" height="77.2" fill="#00e2e2" opacity="0.3"/>
<rect x="680.1" y="1646.5" width="4.0" height="33.7" fill="#00e2e2" />
<rect x="687.1" y="1646.5" width="3.0" height="77.2" fill="#00e2e2" opacity="0.3"/>
<rect x="691.1" y="1646.5" width="3.0" height="64.2" fill="#00e2e2" opacity="0.3"/>
<rect x="694.1" y="1646.5" width="3.0" height="77.2" fill="#00e2e2" opacity="0.55"/>
<rect x="694.1" y="1646.5" width="3.0" height="31.6" fill="#00e2e2" />
<rect x="700.1" y="1646.5" width="3.0" height="77.2" fill="#00e2e2" />
<rect x="704.1" y="1646.5" width="8.0" height="77.2" fill="#00e2e2" />
<rect x="732.3" y="1646.5" width="4.0" height="77.2" fill="#00e2e2" />
<rect x="741.5" y="1646.5" width="8.0" height="38.7" fill="#00e2e2" />
<rect x="765.0" y="1646.5" width="8.0" height="77.2" fill="#00e2e2" />
<rect x="773.0" y="1646.5" width="4.0" height="77.2" fill="#00e2e2" />
<rect x="778.0" y="1646.5" width="3.0" height="77.2" fill="#00e2e2" />
<rect x="782.0" y="1646.5" width="4.0" height="33.4" fill="#00e2e2" opacity="0.55"/>
<rect x="786.0" y="1646.5" width="3.0" height="77.2" fill="#00e2e2" opacity="0.55"/>
<rect x="786.0" y="1646.5" width="3.0" height="37.3" fill="#00e2e2" />
<rect x="790.0" y="1646.5" width="5.0" height="77.2" fill="#00e2e2" />
<rect x="798.0" y="1646.5" width="4.0" height="77.2" fill="#00e2e2" />
<rect x="802.0" y="1646.5" width="6.0" height="77.2" fill="#00e2e2" />
<rect x="811.0" y="1646.5" width="3.0" height="67.6" fill="#00e2e2" />
<rect x="823.6" y="1646.5" width="4.0" height="77.2" fill="#00e2e2" />
<rect x="830.6" y="1646.5" width="4.0" height="57.1" fill="#00e2e2" />
<rect x="837.6" y="1646.5" width="5.0" height="77.2" fill="#00e2e2" />
<rect x="845.6" y="1646.5" width="5.0" height="77.2" fill="#00e2e2" />
<rect x="853.6" y="1646.5" width="3.0" height="77.2" fill="#00e2e2" />
<rect x="861.4" y="1646.5" width="4.0" height="77.2" fill="#00e2e2" />
<rect x="868.4" y="1646.5" width="5.0" height="77.2" fill="#00e2e2" opacity="0.55"/>
<rect x="875.4" y="1646.5" width="4.0" height="77.2" fill="#00e2e2" />
<rect x="879.4" y="1646.5" width="5.0" height="77.2" fill="#00e2e2" opacity="0.55"/>
<rect x="879.4" y="1646.5" width="5.0" height="39.3" fill="#00e2e2" />
<rect x="884.4" y="1646.5" width="4.0" height="77.2" fill="#00e2e2" opacity="0.55"/>
<rect x="884.4" y="1646.5" width="4.0" height="37.9" fill="#00e2e2" />
<rect x="888.4" y="1646.5" width="3.0" height="36.6" fill="#00e2e2" />
<rect x="891.4" y="1646.5" width="5.0" height="74.8" fill="#00e2e2" />
<rect x="898.4" y="1646.5" width="1.6" height="77.2" fill="#00e2e2" />
<rect x="906.6" y="1550.5" width="3.0" height="96.0" fill="#00e2e2" opacity="0.3"/>
<rect x="906.6" y="1587.7" width="3.0" height="58.8" fill="#00e2e2" />
<rect x="910.6" y="1557.1" width="4.0" height="89.4" fill="#00e2e2" />
<rect x="914.6" y="1550.5" width="6.0" height="96.0" fill="#00e2e2" opacity="0.55"/>
<rect x="914.6" y="1619.7" width="6.0" height="26.8" fill="#00e2e2" />
<rect x="920.6" y="1550.5" width="5.0" height="96.0" fill="#00e2e2" />
<rect x="928.6" y="1552.6" width="4.0" height="93.9" fill="#00e2e2" />
<rect x="935.6" y="1605.8" width="4.0" height="40.7" fill="#00e2e2" opacity="0.55"/>
<rect x="941.6" y="1550.5" width="6.0" height="96.0" fill="#00e2e2" />
<rect x="949.6" y="1550.5" width="4.0" height="96.0" fill="#00e2e2" opacity="0.3"/>
<rect x="949.6" y="1617.8" width="4.0" height="28.7" fill="#00e2e2" />
<rect x="953.6" y="1562.6" width="5.0" height="83.9" fill="#00e2e2" />
<rect x="958.6" y="1550.5" width="4.0" height="96.0" fill="#00e2e2" opacity="0.55"/>
<rect x="958.6" y="1610.1" width="4.0" height="36.4" fill="#00e2e2" />
<rect x="962.6" y="1562.0" width="5.0" height="84.5" fill="#00e2e2" />
<rect x="968.6" y="1611.0" width="5.0" height="35.5" fill="#00e2e2" opacity="0.55"/>
<rect x="968.6" y="1620.3" width="5.0" height="26.2" fill="#00e2e2" />
<rect x="973.6" y="1550.5" width="6.0" height="96.0" fill="#00e2e2" />
<rect x="987.7" y="1567.4" width="3.0" height="79.1" fill="#00e2e2" />
<rect x="990.7" y="1550.5" width="8.0" height="96.0" fill="#00e2e2" />
<rect x="999.7" y="1586.9" width="4.0" height="59.6" fill="#00e2e2" />
<rect x="1004.7" y="1550.5" width="3.0" height="96.0" fill="#00e2e2" />
<rect x="1035.5" y="1563.0" width="8.0" height="83.5" fill="#00e2e2" opacity="0.3"/>
<rect x="1045.5" y="1574.7" width="3.0" height="71.8" fill="#00e2e2" />
<rect x="1050.5" y="1550.5" width="4.0" height="96.0" fill="#00e2e2" opacity="0.3"/>
<rect x="1062.1" y="1550.5" width="3.0" height="96.0" fill="#00e2e2" opacity="0.3"/>
<rect x="1067.1" y="1595.0" width="3.0" height="51.5" fill="#00e2e2" opacity="0.3"/>
<rect x="1067.1" y="1610.8" width="3.0" height="35.7" fill="#00e2e2" />
<rect x="1072.1" y="1617.4" width="8.0" height="29.1" fill="#00e2e2" opacity="0.55"/>
<rect x="1072.1" y="1625.3" width="8.0" height="21.2" fill="#00e2e2" />
<rect x="1083.1" y="1615.7" width="8.0" height="30.8" fill="#00e2e2" opacity="0.55"/>
<rect x="1091.1" y="1550.5" width="4.0" height="96.0" fill="#00e2e2" opacity="0.3"/>
<rect x="1096.1" y="1550.5" width="5.0" height="96.0" fill="#00e2e2" />
<rect x="1102.1" y="1550.5" width="3.0" height="96.0" fill="#00e2e2" />
<rect x="1108.1" y="1550.5" width="4.0" height="96.0" fill="#00e2e2" />
<rect x="1114.1" y="1550.5" width="4.0" height="96.0" fill="#00e2e2" />
<rect x="1119.1" y="1572.8" width="4.0" height="73.7" fill="#00e2e2" opacity="0.3"/>
<rect x="1125.1" y="1550.5" width="4.0" height="96.0" fill="#00e2e2" />
<rect x="1130.1" y="1551.2" width="5.0" height="95.3" fill="#00e2e2" />
<rect x="1137.1" y="1600.3" width="8.0" height="46.2" fill="#00e2e2" />
<rect x="1154.7" y="1599.2" width="4.0" height="47.3" fill="#00e2e2" />
<rect x="1160.7" y="1605.6" width="3.0" height="40.9" fill="#00e2e2" opacity="0.3"/>
<rect x="1160.7" y="1622.4" width="3.0" height="24.1" fill="#00e2e2" />
<rect x="1164.7" y="1577.0" width="3.0" height="69.5" fill="#00e2e2" />
<rect x="1167.7" y="1550.5" width="6.0" height="96.0" fill="#00e2e2" opacity="0.3"/>
<rect x="1176.7" y="1579.4" width="4.0" height="67.1" fill="#00e2e2" />
<rect x="1180.7" y="1550.5" width="5.0" height="96.0" fill="#00e2e2" />
<rect x="1186.7" y="1603.9" width="4.0" height="42.6" fill="#00e2e2" opacity="0.55"/>
<rect x="1192.7" y="1588.4" width="3.0" height="58.1" fill="#00e2e2" />
<rect x="1197.7" y="1567.9" width="6.0" height="78.6" fill="#00e2e2" opacity="0.55"/>
<rect x="1206.7" y="1596.8" width="3.0" height="49.7" fill="#00e2e2" />
<rect x="1211.7" y="1550.5" width="4.0" height="96.0" fill="#00e2e2" opacity="0.3"/>
<rect x="1211.7" y="1607.3" width="4.0" height="39.2" fill="#00e2e2" />
<rect x="1246.6" y="1590.9" width="6.0" height="55.6" fill="#00e2e2" />
<rect x="1260.4" y="1605.5" width="5.0" height="41.0" fill="#00e2e2" opacity="0.55"/>
<rect x="1268.4" y="1550.5" width="8.0" height="96.0" fill="#00e2e2" />
<rect x="1278.4" y="1550.5" width="6.0" height="96.0" fill="#00e2e2" />
<rect x="1286.4" y="1572.6" width="4.0" height="73.9" fill="#00e2e2" />
<rect x="1293.4" y="1567.2" width="3.0" height="79.3" fill="#00e2e2" opacity="0.3"/>
<rect x="1293.4" y="1596.9" width="3.0" height="49.6" fill="#00e2e2" />
<rect x="1296.4" y="1550.5" width="4.0" height="96.0" fill="#00e2e2" />
<rect x="1313.5" y="1560.5" width="5.0" height="86.0" fill="#00e2e2" />
<rect x="1319.5" y="1550.5" width="6.0" height="96.0" fill="#00e2e2" opacity="0.3"/>
<rect x="1327.5" y="1602.9" width="4.0" height="43.6" fill="#00e2e2" opacity="0.3"/>
<rect x="1333.5" y="1608.3" width="3.0" height="38.2" fill="#00e2e2" />
<rect x="1343.3" y="1553.1" width="8.0" height="93.4" fill="#00e2e2" />
<rect x="900.0" y="1646.5" width="4.0" height="77.2" fill="#00e2e2" />
<rect x="906.0" y="1646.5" width="4.0" height="57.0" fill="#00e2e2" />
<rect x="911.0" y="1646.5" width="4.0" height="77.2" fill="#00e2e2" opacity="0.3"/>
<rect x="911.0" y="1646.5" width="4.0" height="69.8" fill="#00e2e2" />
<rect x="922.5" y="1646.5" width="5.0" height="77.2" fill="#00e2e2" />
<rect x="928.5" y="1646.5" width="8.0" height="77.2" fill="#00e2e2" />
<rect x="938.5" y="1646.5" width="5.0" height="77.2" fill="#00e2e2" />
<rect x="945.5" y="1646.5" width="8.0" height="77.2" fill="#00e2e2" opacity="0.3"/>
<rect x="945.5" y="1646.5" width="8.0" height="40.6" fill="#00e2e2" />
<rect x="955.5" y="1646.5" width="4.0" height="77.2" fill="#00e2e2" />
<rect x="959.5" y="1646.5" width="3.0" height="77.2" fill="#00e2e2" opacity="0.3"/>
<rect x="963.5" y="1646.5" width="3.0" height="53.6" fill="#00e2e2" />
<rect x="969.5" y="1646.5" width="8.0" height="77.2" fill="#00e2e2" opacity="0.3"/>
<rect x="969.5" y="1646.5" width="8.0" height="44.8" fill="#00e2e2" />
<rect x="979.5" y="1646.5" width="4.0" height="33.0" fill="#00e2e2" />
<rect x="995.1" y="1646.5" width="4.0" height="77.2" fill="#00e2e2" opacity="0.3"/>
<rect x="995.1" y="1646.5" width="4.0" height="26.2" fill="#00e2e2" />
<rect x="999.1" y="1646.5" width="6.0" height="70.4" fill="#00e2e2" />
<rect x="1005.1" y="1646.5" width="6.0" height="71.8" fill="#00e2e2" />
<rect x="1014.1" y="1646.5" width="3.0" height="65.3" fill="#00e2e2" opacity="0.3"/>
<rect x="1014.1" y="1646.5" width="3.0" height="28.5" fill="#00e2e2" />
<rect x="1019.1" y="1646.5" width="3.0" height="58.7" fill="#00e2e2" />
<rect x="1024.1" y="1646.5" width="3.0" height="77.2" fill="#00e2e2" />
<rect x="1028.1" y="1646.5" width="5.0" height="69.8" fill="#00e2e2" opacity="0.3"/>
<rect x="1028.1" y="1646.5" width="5.0" height="21.0" fill="#00e2e2" />
<rect x="1035.1" y="1646.5" width="6.0" height="69.9" fill="#00e2e2" opacity="0.55"/>
<rect x="1065.7" y="1646.5" width="4.0" height="77.2" fill="#00e2e2" />
<rect x="1069.7" y="1646.5" width="5.0" height="59.3" fill="#00e2e2" />
<rect x="1076.7" y="1646.5" width="3.0" height="46.3" fill="#00e2e2" opacity="0.3"/>
<rect x="1076.7" y="1646.5" width="3.0" height="15.2" fill="#00e2e2" />
<rect x="1096.8" y="1646.5" width="4.0" height="77.2" fill="#00e2e2" opacity="0.36"/>
<rect x="1101.8" y="1646.5" width="3.0" height="65.7" fill="#00e2e2" opacity="0.36"/>
<rect x="1109.9" y="1646.5" width="4.0" height="77.2" fill="#00e2e2" opacity="0.3"/>
<rect x="1116.9" y="1646.5" width="5.0" height="53.4" fill="#00e2e2" />
<rect x="1132.9" y="1646.5" width="4.0" height="77.2" fill="#00e2e2" />
<rect x="1137.9" y="1646.5" width="3.0" height="77.2" fill="#00e2e2" />
<rect x="1142.9" y="1646.5" width="6.0" height="77.2" fill="#00e2e2" />
<rect x="1162.9" y="1646.5" width="5.0" height="77.2" fill="#00e2e2" />
<rect x="1169.9" y="1646.5" width="6.0" height="34.8" fill="#00e2e2" />
<rect x="1175.9" y="1646.5" width="3.0" height="36.5" fill="#00e2e2" opacity="0.3"/>
<rect x="1175.9" y="1646.5" width="3.0" height="19.0" fill="#00e2e2" />
<rect x="1179.9" y="1646.5" width="3.0" height="77.2" fill="#00e2e2" />
<rect x="1182.9" y="1646.5" width="3.0" height="60.6" fill="#00e2e2" opacity="0.55"/>
<rect x="1182.9" y="1646.5" width="3.0" height="26.5" fill="#00e2e2" />
<rect x="1235.0" y="1646.5" width="6.0" height="77.2" fill="#00e2e2" />
<rect x="1243.0" y="1646.5" width="3.0" height="77.2" fill="#00e2e2" opacity="0.3"/>
<rect x="1246.0" y="1646.5" width="5.0" height="51.9" fill="#00e2e2" />
<rect x="1252.0" y="1646.5" width="6.0" height="77.2" fill="#00e2e2" opacity="0.3"/>
<rect x="1259.0" y="1646.5" width="4.0" height="77.2" fill="#00e2e2" />
<rect x="1264.0" y="1646.5" width="6.0" height="77.2" fill="#00e2e2" />
<rect x="1272.0" y="1646.5" width="5.0" height="77.2" fill="#00e2e2" opacity="0.55"/>
<rect x="1279.0" y="1646.5" width="8.0" height="77.2" fill="#00e2e2" />
<rect x="1288.0" y="1646.5" width="8.0" height="49.9" fill="#00e2e2" />
<rect x="1314.5" y="1646.5" width="6.0" height="77.2" fill="#00e2e2" opacity="0.3"/>
<rect x="1314.5" y="1646.5" width="6.0" height="59.8" fill="#00e2e2" />
<rect x="1322.5" y="1646.5" width="3.0" height="77.2" fill="#00e2e2" />
<rect x="1334.1" y="1646.5" width="5.0" height="77.2" fill="#00e2e2" opacity="0.3"/>
<rect x="1339.1" y="1646.5" width="3.0" height="29.5" fill="#00e2e2" />
<rect x="1349.2" y="1646.5" width="3.8" height="43.1" fill="#00e2e2" />
<rect x="490.5" y="1550.5" width="5.0" height="173.0" fill="#00e2e2" />
<rect x="1583.7" y="1648.9" width="5.3" height="26.4" fill="#00e2e2" />
<rect x="1584.4" y="1675.3" width="4.0" height="48.4" fill="#00e2e2" opacity="0.4"/>
<rect x="2107.3" y="1625.2" width="4.7" height="63.4" fill="#00e2e2" opacity="0.35"/>
<rect x="2190.8" y="1646.5" width="4.7" height="77.1" fill="#00e2e2" opacity="0.35"/>
<rect x="2198.1" y="1568.4" width="3.3" height="78.1" fill="#00e2e2" opacity="0.35"/>
<rect x="2107.3" y="1625.2" width="6.0" height="63.4" fill="#00e2e2" opacity="0.35"/>
<rect x="2191.8" y="1646.5" width="4.0" height="77.1" fill="#00e2e2" opacity="0.3"/>
<rect x="2200.2" y="1568.4" width="4.0" height="78.1" fill="#00e2e2" opacity="0.6"/>
<rect x="2201.8" y="1550.0" width="5.0" height="96.5" fill="#00e2e2" opacity="0.35"/>
<rect x="2201.8" y="1621.8" width="6.7" height="24.7" fill="#00e2e2" />
<rect x="2200.2" y="1646.5" width="4.0" height="48.7" fill="#00e2e2" opacity="0.6"/>
<rect x="2202.8" y="1646.5" width="4.0" height="77.1" fill="#00e2e2" opacity="0.35"/>
<rect x="2212.9" y="1556.7" width="4.0" height="89.8" fill="#00e2e2" opacity="0.5"/>
<rect x="2215.2" y="1580.1" width="5.0" height="66.4" fill="#00e2e2" opacity="0.8"/>
<rect x="2213.5" y="1616.8" width="8.3" height="29.7" fill="#00e2e2" />
<rect x="2212.9" y="1646.5" width="5.7" height="72.1" fill="#00e2e2" opacity="0.6"/>
<rect x="2226.2" y="1573.4" width="4.0" height="73.1" fill="#00e2e2" opacity="0.45"/>
<rect x="2236.9" y="1550.0" width="6.0" height="96.5" fill="#00e2e2" opacity="0.3"/>
<rect x="2240.2" y="1646.5" width="5.0" height="48.7" fill="#00e2e2" opacity="0.9"/>
<rect x="2241.9" y="1646.5" width="5.0" height="63.8" fill="#00e2e2" opacity="0.35"/>
<rect x="2250.3" y="1646.5" width="3.3" height="77.1" fill="#00e2e2" opacity="0.3"/>
<rect x="2256.9" y="1550.0" width="4.0" height="96.5" fill="#00e2e2" opacity="0.35"/>
<rect x="2256.9" y="1646.5" width="4.0" height="42.1" fill="#00e2e2" opacity="0.35"/>
<rect x="2265.3" y="1550.0" width="4.3" height="96.5" fill="#00e2e2" opacity="0.3"/>
<rect x="2266.9" y="1646.5" width="7.3" height="77.1" fill="#00e2e2" />
<rect x="2278.0" y="1581.8" width="4.0" height="64.8" fill="#00e2e2" opacity="0.6"/>
<rect x="2280.3" y="1550.0" width="4.3" height="96.5" fill="#00e2e2" opacity="0.35"/>
<rect x="2279.6" y="1646.5" width="4.7" height="77.1" fill="#00e2e2" opacity="0.35"/>
<rect x="2291.3" y="1550.0" width="8.0" height="96.5" fill="#00e2e2" />
<rect x="2292.0" y="1646.5" width="7.3" height="77.1" fill="#00e2e2" />
<rect x="2300.3" y="1578.4" width="5.0" height="68.1" fill="#00e2e2" opacity="0.45"/>
<rect x="2303.0" y="1646.5" width="5.7" height="63.8" fill="#00e2e2" opacity="0.9"/>
<rect x="2306.3" y="1558.4" width="7.3" height="88.1" fill="#00e2e2" opacity="0.95"/>
<rect x="2308.7" y="1550.0" width="3.3" height="8.3" fill="#00e2e2" opacity="0.4"/>
<rect x="2307.0" y="1646.5" width="4.0" height="77.1" fill="#00e2e2" opacity="0.35"/>
<rect x="2313.7" y="1570.1" width="7.3" height="76.5" fill="#00e2e2" opacity="0.3"/>
<rect x="2401.5" y="1561.7" width="5.7" height="84.8" fill="#00e2e2" />
<rect x="2401.5" y="1646.5" width="5.0" height="65.4" fill="#00e2e2" />
<rect x="2402.2" y="1712.0" width="3.3" height="11.7" fill="#00e2e2" opacity="0.4"/>
<rect x="2413.9" y="1561.7" width="4.0" height="84.8" fill="#00e2e2" opacity="0.3"/>
<rect x="2419.9" y="1556.7" width="4.7" height="89.8" fill="#00e2e2" opacity="0.4"/>
<rect x="2422.2" y="1565.1" width="10.0" height="81.5" fill="#00e2e2" />
<rect x="2421.2" y="1646.5" width="11.0" height="77.1" fill="#00e2e2" />
<rect x="2433.9" y="1646.5" width="4.0" height="25.4" fill="#00e2e2" opacity="0.9"/>
<rect x="2437.2" y="1555.1" width="5.0" height="91.5" fill="#00e2e2" opacity="0.4"/>
<rect x="2437.9" y="1565.1" width="15.4" height="81.5" fill="#00e2e2" />
<rect x="2438.9" y="1646.5" width="5.0" height="77.1" fill="#00e2e2" opacity="0.35"/>
<rect x="2442.2" y="1646.5" width="5.0" height="38.7" fill="#00e2e2" opacity="0.9"/>
<rect x="2456.6" y="1550.0" width="4.7" height="96.5" fill="#00e2e2" />
<rect x="2479.0" y="1646.5" width="3.3" height="77.1" fill="#00e2e2" opacity="0.3"/>
<rect x="2482.3" y="1550.0" width="8.3" height="96.5" fill="#00e2e2" opacity="0.35"/>
<rect x="2484.0" y="1646.5" width="5.0" height="75.5" fill="#00e2e2" />
<rect x="2490.0" y="1550.0" width="5.7" height="96.5" fill="#00e2e2" />
<rect x="2492.3" y="1646.5" width="3.3" height="43.7" fill="#00e2e2" opacity="0.35"/>
<rect x="2712.7" y="1596.8" width="4.3" height="49.7" fill="#00e2e2" opacity="0.35"/>
<rect x="2721.7" y="1606.8" width="5.3" height="39.7" fill="#00e2e2" opacity="0.5"/>
<rect x="2722.7" y="1623.5" width="3.7" height="23.0" fill="#00e2e2" />
<rect x="2729.4" y="1585.1" width="4.0" height="61.4" fill="#00e2e2" opacity="0.35"/>
<rect x="2874.0" y="1550.0" width="5.3" height="173.6" fill="#00e2e2" opacity="0.3"/>
<rect x="2956.4" y="1613.5" width="3.7" height="98.5" fill="#00e2e2" opacity="0.35"/>
<rect x="2957.1" y="1613.5" width="4.7" height="33.1" fill="#00e2e2" opacity="0.35"/>
<rect x="2958.4" y="1646.5" width="4.3" height="65.4" fill="#00e2e2" opacity="0.35"/>
<rect x="2997.1" y="1596.8" width="4.0" height="49.7" fill="#00e2e2" opacity="0.6"/>
<rect x="2999.5" y="1550.0" width="5.0" height="96.5" fill="#00e2e2" opacity="0.35"/>
<rect x="3007.8" y="1646.5" width="4.0" height="38.7" fill="#00e2e2" opacity="0.4"/>
<rect x="3013.8" y="1646.5" width="3.3" height="25.4" fill="#00e2e2" opacity="0.3"/>
<rect x="3017.2" y="1574.4" width="4.7" height="149.2" fill="#00e2e2" opacity="0.35"/>
<rect x="3023.8" y="1646.5" width="4.7" height="18.7" fill="#00e2e2" opacity="0.3"/>
<rect x="3037.2" y="1646.5" width="5.7" height="37.1" fill="#00e2e2" />
<rect x="3048.9" y="1550.0" width="4.7" height="96.5" fill="#00e2e2" opacity="0.35"/>
<rect x="3047.2" y="1646.5" width="6.7" height="65.4" fill="#00e2e2" opacity="0.95"/>
<rect x="3049.5" y="1712.0" width="4.0" height="11.7" fill="#00e2e2" opacity="0.5"/>
<rect x="3061.2" y="1586.8" width="7.3" height="136.9" fill="#00e2e2" />
<rect x="3069.6" y="1628.5" width="5.0" height="18.0" fill="#00e2e2" opacity="0.4"/>
<rect x="3069.6" y="1646.5" width="8.3" height="63.8" fill="#00e2e2" opacity="0.35"/>
<rect x="3074.6" y="1596.8" width="7.3" height="49.7" fill="#00e2e2" opacity="0.9"/>
<rect x="3106.3" y="1620.2" width="4.3" height="26.4" fill="#00e2e2" opacity="0.35"/>
<rect x="3159.1" y="1646.5" width="4.0" height="33.7" fill="#00e2e2" opacity="0.35"/>
<rect x="3185.8" y="1625.2" width="6.3" height="21.4" fill="#00e2e2" opacity="0.95"/>
<rect x="3199.8" y="1630.2" width="3.7" height="16.4" fill="#00e2e2" opacity="0.35"/>
<rect x="3208.8" y="1620.2" width="4.7" height="26.4" fill="#00e2e2" opacity="0.9"/>
<rect x="3216.5" y="1616.8" width="3.7" height="29.7" fill="#00e2e2" opacity="0.35"/>
<rect x="3349.4" y="1646.5" width="4.0" height="58.8" fill="#00e2e2" opacity="0.3"/>
<rect x="3356.1" y="1646.5" width="6.7" height="77.1" fill="#00e2e2" />
<rect x="3402.8" y="1568.4" width="4.3" height="78.1" fill="#00e2e2" opacity="0.4"/>
<rect x="3404.1" y="1588.4" width="11.0" height="58.1" fill="#00e2e2" />
<rect x="3410.8" y="1550.0" width="5.7" height="96.5" fill="#00e2e2" />
<rect x="3411.2" y="1646.5" width="4.7" height="77.1" fill="#00e2e2" />
<rect x="3424.5" y="1646.5" width="4.0" height="77.1" fill="#00e2e2" opacity="0.3"/>
<rect x="3696.3" y="1596.8" width="5.3" height="49.7" fill="#00e2e2" opacity="0.35"/>
<rect x="3697.3" y="1646.5" width="5.0" height="62.1" fill="#00e2e2" opacity="0.95"/>
<rect x="3698.0" y="1708.6" width="3.7" height="15.0" fill="#00e2e2" opacity="0.35"/>
<rect x="674.7" y="948.9" width="4.3" height="41.4" fill="#5a5ac8" opacity="0.4"/>
<rect x="1070.3" y="900.1" width="4.0" height="48.7" fill="#5a5ac8" opacity="0.45"/>
<rect x="1075.3" y="900.1" width="5.0" height="48.7" fill="#5a5ac8" />
<rect x="1077.7" y="890.1" width="4.0" height="10.0" fill="#5a5ac8" opacity="0.35"/>
<rect x="1572.7" y="948.9" width="6.3" height="73.1" fill="#5a5ac8" />
<rect x="1572.7" y="1022.0" width="6.3" height="21.7" fill="#5a5ac8" opacity="0.45"/>
<rect x="1584.4" y="948.9" width="3.7" height="36.4" fill="#5a5ac8" opacity="0.35"/>
<rect x="1835.8" y="890.1" width="4.0" height="58.8" fill="#5a5ac8" opacity="0.5"/>
<rect x="1838.5" y="870.1" width="6.3" height="78.8" fill="#5a5ac8" opacity="0.55"/>
<rect x="1841.8" y="878.4" width="3.3" height="70.5" fill="#5a5ac8" opacity="0.4"/>
<rect x="1855.2" y="875.1" width="4.3" height="73.8" fill="#5a5ac8" opacity="0.6"/>
<rect x="1858.5" y="885.1" width="4.0" height="63.8" fill="#5a5ac8" opacity="0.4"/>
<rect x="1949.3" y="928.5" width="4.3" height="20.4" fill="#5a5ac8" opacity="0.3"/>
<rect x="1962.7" y="933.5" width="5.0" height="15.4" fill="#5a5ac8" opacity="0.4"/>
<rect x="1967.7" y="880.1" width="15.0" height="68.8" fill="#5a5ac8" />
<rect x="1972.7" y="870.1" width="10.0" height="10.0" fill="#5a5ac8" opacity="0.8"/>
<rect x="1976.1" y="878.4" width="8.3" height="70.5" fill="#5a5ac8" opacity="0.45"/>
<rect x="1984.4" y="931.8" width="5.0" height="17.0" fill="#5a5ac8" />
<rect x="1987.7" y="910.1" width="5.0" height="38.7" fill="#5a5ac8" />
<rect x="1988.4" y="856.7" width="6.0" height="92.2" fill="#5a5ac8" opacity="0.55"/>
<rect x="1993.8" y="863.4" width="15.0" height="85.5" fill="#5a5ac8" />
<rect x="1997.1" y="853.0" width="5.7" height="10.4" fill="#5a5ac8" opacity="0.8"/>
<rect x="1961.0" y="948.9" width="56.1" height="23.0" fill="#5a5ac8" />
<rect x="1961.0" y="971.9" width="6.7" height="25.0" fill="#5a5ac8" opacity="0.5"/>
<rect x="1967.7" y="971.9" width="18.4" height="46.7" fill="#5a5ac8" />
<rect x="1971.1" y="1018.7" width="11.7" height="23.4" fill="#5a5ac8" />
<rect x="1986.1" y="971.9" width="15.0" height="70.1" fill="#5a5ac8" opacity="0.5"/>
<rect x="1987.7" y="971.9" width="5.0" height="13.4" fill="#5a5ac8" />
<rect x="2001.1" y="971.9" width="13.4" height="26.7" fill="#5a5ac8" />
<rect x="2001.1" y="998.6" width="8.3" height="26.7" fill="#5a5ac8" />
<rect x="1999.4" y="1025.3" width="6.7" height="15.0" fill="#5a5ac8" opacity="0.9"/>
<rect x="2012.8" y="971.9" width="4.3" height="23.4" fill="#5a5ac8" opacity="0.8"/>
<rect x="2496.5" y="921.8" width="5.7" height="27.0" fill="#5a5ac8" />
<rect x="2501.5" y="881.8" width="5.0" height="67.1" fill="#5a5ac8" />
<rect x="2505.5" y="868.4" width="3.3" height="80.5" fill="#5a5ac8" />
<rect x="2508.2" y="853.0" width="7.3" height="95.8" fill="#5a5ac8" />
<rect x="2526.5" y="865.1" width="4.0" height="83.8" fill="#5a5ac8" opacity="0.4"/>
<rect x="2528.9" y="896.8" width="5.0" height="52.1" fill="#5a5ac8" opacity="0.6"/>
<rect x="2531.6" y="873.4" width="3.3" height="75.5" fill="#5a5ac8" opacity="0.4"/>
<rect x="2538.9" y="856.7" width="5.0" height="92.2" fill="#5a5ac8" opacity="0.95"/>
<rect x="2542.9" y="886.8" width="4.3" height="62.1" fill="#5a5ac8" />
<rect x="2547.2" y="891.8" width="3.3" height="57.1" fill="#5a5ac8" opacity="0.45"/>
<rect x="2549.9" y="861.7" width="4.0" height="87.1" fill="#5a5ac8" opacity="0.5"/>
<rect x="2553.9" y="881.8" width="5.0" height="67.1" fill="#5a5ac8" opacity="0.6"/>
<rect x="2556.6" y="875.1" width="3.3" height="73.8" fill="#5a5ac8" opacity="0.4"/>
<rect x="2561.6" y="871.7" width="4.0" height="77.1" fill="#5a5ac8" opacity="0.5"/>
<rect x="2566.3" y="851.7" width="3.7" height="97.2" fill="#5a5ac8" opacity="0.45"/>
<rect x="2654.8" y="883.4" width="4.0" height="65.4" fill="#5a5ac8" opacity="0.4"/>
<rect x="2662.4" y="900.1" width="3.7" height="48.7" fill="#5a5ac8" opacity="0.4"/>
<rect x="2682.5" y="934.5" width="3.7" height="14.4" fill="#5a5ac8" opacity="0.4"/>
<rect x="2690.2" y="937.9" width="3.3" height="11.0" fill="#5a5ac8" opacity="0.5"/>
<rect x="2501.5" y="948.9" width="3.3" height="14.7" fill="#5a5ac8" opacity="0.35"/>
<rect x="2507.2" y="948.9" width="7.3" height="84.8" fill="#5a5ac8" />
<rect x="2508.8" y="1033.7" width="5.0" height="8.3" fill="#5a5ac8" opacity="0.8"/>
<rect x="2520.5" y="948.9" width="20.0" height="76.5" fill="#5a5ac8" opacity="0.95"/>
<rect x="2520.5" y="1025.3" width="8.3" height="18.4" fill="#5a5ac8" opacity="0.95"/>
<rect x="2533.9" y="1025.3" width="6.7" height="15.0" fill="#5a5ac8" opacity="0.95"/>
<rect x="2547.2" y="948.9" width="5.0" height="78.1" fill="#5a5ac8" opacity="0.9"/>
<rect x="2552.3" y="948.9" width="6.7" height="49.7" fill="#5a5ac8" />
<rect x="2552.3" y="998.6" width="6.7" height="23.4" fill="#5a5ac8" opacity="0.4"/>
<rect x="2558.9" y="948.9" width="6.7" height="23.0" fill="#5a5ac8" opacity="0.9"/>
<rect x="2558.9" y="971.9" width="11.0" height="46.7" fill="#5a5ac8" opacity="0.4"/>
<rect x="2586.6" y="948.9" width="4.0" height="64.8" fill="#5a5ac8" opacity="0.4"/>
<rect x="2589.0" y="948.9" width="5.7" height="31.4" fill="#5a5ac8" opacity="0.95"/>
<rect x="2590.0" y="980.3" width="4.0" height="63.4" fill="#5a5ac8" opacity="0.4"/>
<rect x="2604.7" y="948.9" width="4.0" height="31.4" fill="#5a5ac8" opacity="0.35"/>
<rect x="2614.0" y="948.9" width="6.0" height="28.0" fill="#5a5ac8" />
<rect x="2615.0" y="976.9" width="4.3" height="15.0" fill="#5a5ac8" opacity="0.9"/>
<rect x="2615.4" y="991.9" width="4.0" height="16.7" fill="#5a5ac8" opacity="0.4"/>
<rect x="2682.5" y="948.9" width="3.7" height="29.7" fill="#5a5ac8" opacity="0.4"/>
<rect x="3312.3" y="865.1" width="4.3" height="83.8" fill="#5a5ac8" opacity="0.4"/>
<rect x="3314.3" y="903.5" width="5.7" height="45.4" fill="#5a5ac8" opacity="0.6"/>
<rect x="3320.0" y="861.7" width="3.3" height="87.1" fill="#5a5ac8" />
<rect x="3322.7" y="853.0" width="7.3" height="95.8" fill="#5a5ac8" />
<rect x="3329.0" y="893.4" width="3.7" height="55.4" fill="#5a5ac8" opacity="0.9"/>
<rect x="3336.0" y="851.7" width="4.0" height="97.2" fill="#5a5ac8" opacity="0.45"/>
<rect x="3374.1" y="880.1" width="4.3" height="68.8" fill="#5a5ac8" opacity="0.45"/>
<rect x="3376.8" y="871.7" width="4.3" height="77.1" fill="#5a5ac8" opacity="0.4"/>
<rect x="3379.4" y="913.5" width="5.0" height="35.4" fill="#5a5ac8" />
<rect x="3390.1" y="886.8" width="6.7" height="62.1" fill="#5a5ac8" />
<rect x="3391.1" y="860.1" width="4.7" height="26.7" fill="#5a5ac8" opacity="0.6"/>
<rect x="3404.5" y="893.4" width="4.7" height="55.4" fill="#5a5ac8" />
<rect x="3408.5" y="861.7" width="6.7" height="87.1" fill="#5a5ac8" />
<rect x="3406.8" y="880.1" width="4.3" height="68.8" fill="#5a5ac8" opacity="0.9"/>
<rect x="3416.8" y="875.1" width="5.0" height="73.8" fill="#5a5ac8" opacity="0.6"/>
<rect x="3420.2" y="865.1" width="5.0" height="83.8" fill="#5a5ac8" opacity="0.6"/>
<rect x="3424.5" y="853.0" width="9.0" height="95.8" fill="#5a5ac8" opacity="0.6"/>
<rect x="3437.9" y="851.7" width="6.0" height="97.2" fill="#5a5ac8" opacity="0.75"/>
<rect x="3315.7" y="948.9" width="4.0" height="76.5" fill="#5a5ac8" opacity="0.4"/>
<rect x="3321.7" y="948.9" width="8.3" height="83.1" fill="#5a5ac8" />
<rect x="3323.3" y="1032.0" width="5.0" height="6.7" fill="#5a5ac8" opacity="0.9"/>
<rect x="3338.4" y="948.9" width="4.0" height="64.8" fill="#5a5ac8" opacity="0.4"/>
<rect x="3347.0" y="948.9" width="3.3" height="36.4" fill="#5a5ac8" opacity="0.45"/>
<rect x="3350.0" y="948.9" width="3.7" height="83.1" fill="#5a5ac8" opacity="0.4"/>
<rect x="3356.7" y="948.9" width="5.7" height="78.1" fill="#5a5ac8" opacity="0.9"/>
<rect x="3357.7" y="1027.0" width="4.0" height="6.7" fill="#5a5ac8" opacity="0.5"/>
<rect x="3376.8" y="948.9" width="9.0" height="49.7" fill="#5a5ac8" />
<rect x="3379.1" y="998.6" width="6.0" height="11.7" fill="#5a5ac8" opacity="0.9"/>
<rect x="3376.8" y="1010.3" width="5.0" height="31.7" fill="#5a5ac8" opacity="0.45"/>
<rect x="3381.8" y="1010.3" width="4.0" height="13.4" fill="#5a5ac8" opacity="0.4"/>
<rect x="3386.8" y="948.9" width="16.7" height="89.8" fill="#5a5ac8" opacity="0.3"/>
<rect x="3404.5" y="948.9" width="4.0" height="39.7" fill="#5a5ac8" opacity="0.5"/>
<rect x="3409.1" y="948.9" width="8.3" height="69.8" fill="#5a5ac8" />
<rect x="3410.8" y="1018.7" width="5.0" height="25.0" fill="#5a5ac8" opacity="0.8"/>
<rect x="3418.5" y="948.9" width="7.3" height="36.4" fill="#5a5ac8" opacity="0.6"/>
<rect x="3425.2" y="948.9" width="11.7" height="86.5" fill="#5a5ac8" opacity="0.55"/>
<rect x="3436.9" y="948.9" width="7.0" height="76.5" fill="#5a5ac8" />
<rect x="3438.5" y="1025.3" width="4.7" height="16.7" fill="#5a5ac8" opacity="0.8"/>
<rect x="3450.2" y="948.9" width="3.7" height="16.4" fill="#5a5ac8" opacity="0.35"/>
<rect x="3672.3" y="948.9" width="4.0" height="48.1" fill="#5a5ac8" opacity="0.35"/>
<rect x="3678.3" y="948.9" width="4.7" height="31.4" fill="#5a5ac8" opacity="0.6"/>
<rect x="3678.9" y="980.3" width="3.3" height="8.3" fill="#5a5ac8" opacity="0.35"/>
<rect x="3697.3" y="948.9" width="5.7" height="38.1" fill="#5a5ac8" opacity="0.6"/>
<rect x="674.2" y="1181.5" width="3.5" height="27.8" fill="#ebb91e" opacity="0.45"/>
<rect x="938.2" y="1181.5" width="3.5" height="32.6" fill="#ebb91e" opacity="0.4"/>
<rect x="1585.4" y="1083.7" width="4.3" height="97.8" fill="#ebb91e" opacity="0.5"/>
<rect x="1593.1" y="1083.7" width="4.7" height="97.8" fill="#ebb91e" opacity="0.4"/>
<rect x="1585.4" y="1181.5" width="4.3" height="49.1" fill="#ebb91e" opacity="0.9"/>
<rect x="1583.7" y="1230.6" width="4.0" height="16.7" fill="#ebb91e" opacity="0.4"/>
<rect x="1593.1" y="1181.5" width="4.7" height="87.5" fill="#ebb91e" opacity="0.4"/>
<rect x="1814.1" y="1143.8" width="4.3" height="86.8" fill="#ebb91e" opacity="0.4"/>
<rect x="1840.8" y="1083.7" width="4.7" height="97.8" fill="#ebb91e" opacity="0.45"/>
<rect x="1858.5" y="1093.7" width="4.3" height="87.8" fill="#ebb91e" opacity="0.45"/>
<rect x="1872.6" y="1163.2" width="4.0" height="18.4" fill="#ebb91e" opacity="0.45"/>
<rect x="1949.3" y="1085.4" width="5.7" height="192.0" fill="#ebb91e" opacity="0.6"/>
<rect x="1947.7" y="1162.2" width="8.3" height="19.4" fill="#ebb91e" />
<rect x="1958.4" y="1088.7" width="4.3" height="92.8" fill="#ebb91e" opacity="0.35"/>
<rect x="1958.7" y="1181.5" width="4.3" height="82.5" fill="#ebb91e" opacity="0.3"/>
<rect x="1957.7" y="1168.9" width="6.7" height="41.7" fill="#ebb91e" opacity="0.9"/>
<rect x="1962.7" y="1148.8" width="5.0" height="32.7" fill="#ebb91e" opacity="0.4"/>
<rect x="1967.0" y="1088.7" width="4.7" height="92.8" fill="#ebb91e" opacity="0.95"/>
<rect x="1967.7" y="1181.5" width="5.0" height="95.8" fill="#ebb91e" opacity="0.95"/>
<rect x="1972.7" y="1088.7" width="5.7" height="92.8" fill="#ebb91e" opacity="0.5"/>
<rect x="1977.7" y="1105.4" width="6.0" height="76.1" fill="#ebb91e" opacity="0.35"/>
<rect x="1972.7" y="1181.5" width="11.0" height="69.1" fill="#ebb91e" />
<rect x="1978.4" y="1250.7" width="6.0" height="26.7" fill="#ebb91e" opacity="0.9"/>
<rect x="1972.7" y="1250.7" width="5.0" height="10.0" fill="#ebb91e" opacity="0.6"/>
<rect x="1991.8" y="1083.7" width="6.7" height="97.8" fill="#ebb91e" />
<rect x="1997.8" y="1117.1" width="4.7" height="64.4" fill="#ebb91e" />
<rect x="1998.4" y="1083.7" width="4.0" height="33.4" fill="#ebb91e" opacity="0.4"/>
<rect x="2013.8" y="1083.7" width="11.4" height="97.8" fill="#ebb91e" opacity="0.3"/>
<rect x="2017.8" y="1181.5" width="7.3" height="25.7" fill="#ebb91e" opacity="0.3"/>
<rect x="2012.1" y="1181.5" width="5.0" height="84.1" fill="#ebb91e" opacity="0.5"/>
<rect x="2012.1" y="1265.7" width="3.7" height="11.7" fill="#ebb91e" opacity="0.35"/>
<rect x="2041.2" y="1132.1" width="4.7" height="49.4" fill="#ebb91e" opacity="0.35"/>
<rect x="2492.2" y="1153.8" width="5.7" height="27.7" fill="#ebb91e" opacity="0.6"/>
<rect x="2497.2" y="1137.1" width="6.0" height="44.4" fill="#ebb91e" opacity="0.9"/>
<rect x="2502.2" y="1103.7" width="5.0" height="77.8" fill="#ebb91e" />
<rect x="2506.5" y="1085.4" width="9.0" height="96.2" fill="#ebb91e" />
<rect x="2526.5" y="1083.7" width="7.3" height="97.8" fill="#ebb91e" opacity="0.45"/>
<rect x="2534.9" y="1085.4" width="4.7" height="96.2" fill="#ebb91e" opacity="0.35"/>
<rect x="2539.6" y="1117.1" width="4.3" height="64.4" fill="#ebb91e" opacity="0.8"/>
<rect x="2540.6" y="1085.4" width="3.3" height="31.7" fill="#ebb91e" opacity="0.35"/>
<rect x="2553.9" y="1083.7" width="5.0" height="97.8" fill="#ebb91e" opacity="0.5"/>
<rect x="2558.9" y="1085.4" width="11.0" height="96.2" fill="#ebb91e" opacity="0.4"/>
<rect x="2563.9" y="1160.5" width="7.3" height="21.0" fill="#ebb91e" />
<rect x="2569.9" y="1168.9" width="4.7" height="12.7" fill="#ebb91e" opacity="0.8"/>
<rect x="2580.6" y="1105.4" width="4.3" height="76.1" fill="#ebb91e" opacity="0.45"/>
<rect x="2581.3" y="1135.5" width="6.0" height="46.1" fill="#ebb91e" opacity="0.6"/>
<rect x="2589.0" y="1103.7" width="4.3" height="77.8" fill="#ebb91e" opacity="0.5"/>
<rect x="2585.6" y="1143.8" width="11.7" height="37.7" fill="#ebb91e" opacity="0.35"/>
<rect x="2604.0" y="1137.1" width="4.7" height="44.4" fill="#ebb91e" opacity="0.4"/>
<rect x="2614.7" y="1142.1" width="4.7" height="39.4" fill="#ebb91e" opacity="0.5"/>
<rect x="2632.4" y="1083.7" width="5.0" height="97.8" fill="#ebb91e" opacity="0.35"/>
<rect x="2654.1" y="1112.1" width="4.7" height="69.4" fill="#ebb91e" opacity="0.4"/>
<rect x="2662.4" y="1128.8" width="4.0" height="52.8" fill="#ebb91e" opacity="0.45"/>
<rect x="2665.8" y="1140.5" width="4.3" height="41.1" fill="#ebb91e" opacity="0.5"/>
<rect x="2681.5" y="1115.4" width="4.0" height="66.1" fill="#ebb91e" opacity="0.45"/>
<rect x="2689.5" y="1102.1" width="4.7" height="79.5" fill="#ebb91e" opacity="0.5"/>
<rect x="2693.5" y="1160.5" width="4.0" height="21.0" fill="#ebb91e" opacity="0.5"/>
<rect x="2713.2" y="1150.5" width="4.0" height="31.1" fill="#ebb91e" opacity="0.4"/>
<rect x="2722.5" y="1122.1" width="4.3" height="59.4" fill="#ebb91e" opacity="0.45"/>
<rect x="2721.5" y="1163.8" width="4.7" height="17.7" fill="#ebb91e" opacity="0.7"/>
<rect x="2491.5" y="1181.5" width="4.0" height="24.0" fill="#ebb91e" opacity="0.35"/>
<rect x="2497.2" y="1181.5" width="5.0" height="34.1" fill="#ebb91e" opacity="0.6"/>
<rect x="2502.2" y="1181.5" width="3.3" height="22.4" fill="#ebb91e" opacity="0.4"/>
<rect x="2507.2" y="1181.5" width="7.3" height="82.5" fill="#ebb91e" opacity="0.9"/>
<rect x="2509.8" y="1264.0" width="4.0" height="11.7" fill="#ebb91e" opacity="0.5"/>
<rect x="2519.5" y="1181.5" width="21.0" height="94.2" fill="#ebb91e" opacity="0.95"/>
<rect x="2553.9" y="1181.5" width="6.0" height="95.8" fill="#ebb91e" opacity="0.5"/>
<rect x="2559.9" y="1181.5" width="5.7" height="65.8" fill="#ebb91e" opacity="0.45"/>
<rect x="2560.6" y="1247.3" width="4.0" height="26.7" fill="#ebb91e" opacity="0.4"/>
<rect x="2564.9" y="1181.5" width="5.0" height="92.5" fill="#ebb91e" opacity="0.4"/>
<rect x="2580.6" y="1181.5" width="4.3" height="85.8" fill="#ebb91e" opacity="0.4"/>
<rect x="2582.3" y="1181.5" width="5.0" height="22.4" fill="#ebb91e" opacity="0.9"/>
<rect x="2588.3" y="1181.5" width="5.7" height="67.4" fill="#ebb91e" opacity="0.5"/>
<rect x="2589.0" y="1181.5" width="4.3" height="32.4" fill="#ebb91e" opacity="0.8"/>
<rect x="2600.0" y="1181.5" width="4.7" height="25.7" fill="#ebb91e" opacity="0.4"/>
<rect x="2601.7" y="1181.5" width="4.0" height="14.0" fill="#ebb91e" />
<rect x="2604.0" y="1181.5" width="5.0" height="52.4" fill="#ebb91e" opacity="0.4"/>
<rect x="2611.4" y="1181.5" width="6.0" height="15.7" fill="#ebb91e" />
<rect x="2614.0" y="1197.2" width="6.0" height="33.4" fill="#ebb91e" opacity="0.9"/>
<rect x="2615.0" y="1230.6" width="5.0" height="18.4" fill="#ebb91e" opacity="0.5"/>
<rect x="2654.1" y="1181.5" width="4.7" height="60.8" fill="#ebb91e" opacity="0.4"/>
<rect x="2665.8" y="1181.5" width="5.0" height="15.0" fill="#ebb91e" opacity="0.7"/>
<rect x="2679.8" y="1181.5" width="4.3" height="10.7" fill="#ebb91e" opacity="0.9"/>
<rect x="2681.5" y="1181.5" width="4.3" height="87.5" fill="#ebb91e" opacity="0.4"/>
<rect x="2689.5" y="1181.5" width="4.7" height="75.8" fill="#ebb91e" opacity="0.45"/>
<rect x="2722.5" y="1181.5" width="4.3" height="65.8" fill="#ebb91e" opacity="0.4"/>
<rect x="3356.7" y="1083.7" width="6.7" height="97.8" fill="#ebb91e" />
<rect x="3362.4" y="1143.8" width="6.0" height="37.7" fill="#ebb91e" />
<rect x="3365.1" y="1103.7" width="5.0" height="77.8" fill="#ebb91e" opacity="0.7"/>
<rect x="3368.4" y="1083.7" width="4.0" height="97.8" fill="#ebb91e" opacity="0.35"/>
<rect x="3372.8" y="1083.7" width="4.3" height="97.8" fill="#ebb91e" opacity="0.4"/>
<rect x="3409.8" y="1083.7" width="6.0" height="97.8" fill="#ebb91e" />
<rect x="3415.8" y="1143.8" width="7.7" height="37.7" fill="#ebb91e" opacity="0.85"/>
<rect x="3421.8" y="1085.4" width="5.0" height="96.2" fill="#ebb91e" opacity="0.35"/>
<rect x="3425.2" y="1117.1" width="6.7" height="64.4" fill="#ebb91e" opacity="0.7"/>
<rect x="3430.2" y="1085.4" width="4.3" height="96.2" fill="#ebb91e" opacity="0.4"/>
<rect x="3322.7" y="1181.5" width="8.3" height="65.8" fill="#ebb91e" />
<rect x="3324.3" y="1247.3" width="4.7" height="28.4" fill="#ebb91e" opacity="0.6"/>
<rect x="3338.4" y="1181.5" width="4.0" height="85.8" fill="#ebb91e" opacity="0.35"/>
<rect x="3350.0" y="1181.5" width="4.3" height="94.2" fill="#ebb91e" opacity="0.45"/>
<rect x="3356.1" y="1181.5" width="6.7" height="94.2" fill="#ebb91e" />
<rect x="3366.7" y="1181.5" width="3.3" height="9.0" fill="#ebb91e" opacity="0.5"/>
<rect x="3376.8" y="1181.5" width="5.0" height="92.5" fill="#ebb91e" opacity="0.5"/>
<rect x="3378.4" y="1181.5" width="8.3" height="49.1" fill="#ebb91e" />
<rect x="3383.4" y="1230.6" width="5.0" height="43.4" fill="#ebb91e" opacity="0.45"/>
<rect x="3410.5" y="1181.5" width="5.3" height="85.8" fill="#ebb91e" opacity="0.9"/>
<rect x="3415.2" y="1181.5" width="4.0" height="19.0" fill="#ebb91e" />
<rect x="3423.5" y="1181.5" width="5.0" height="94.2" fill="#ebb91e" opacity="0.45"/>
<rect x="3425.8" y="1181.5" width="11.0" height="49.1" fill="#ebb91e" opacity="0.6"/>
<rect x="3430.2" y="1230.6" width="5.0" height="20.0" fill="#ebb91e" opacity="0.5"/>
<rect x="3436.9" y="1181.5" width="6.7" height="94.2" fill="#ebb91e" opacity="0.95"/>
<rect x="490.0" y="480.3" width="3226.0" height="1.6" fill="#dcdcdc" opacity="0.6"/>
<rect x="490.0" y="481.7" width="3226.0" height="4.0" fill="#c2c2c2" opacity="0.92"/>
<rect x="490.0" y="485.5" width="3226.0" height="1.6" fill="#e2e2e2" opacity="0.5"/>
<rect x="2101.5" y="387.5" width="3.0" height="192.0" fill="#9a9a9a" />
<rect x="2091.0" y="386.5" width="12.0" height="3.0" fill="#9a9a9a" />
<rect x="2091.0" y="577.5" width="12.0" height="3.0" fill="#9a9a9a" />
<rect x="2091.0" y="482.0" width="12.0" height="3.0" fill="#9a9a9a" />
<rect x="2097.0" y="386.5" width="5.0" height="2.0" fill="#aaaaaa" />
<rect x="2097.0" y="396.1" width="5.0" height="2.0" fill="#aaaaaa" />
<rect x="2097.0" y="405.7" width="5.0" height="2.0" fill="#aaaaaa" />
<rect x="2097.0" y="415.3" width="5.0" height="2.0" fill="#aaaaaa" />
<rect x="2097.0" y="424.9" width="5.0" height="2.0" fill="#aaaaaa" />
<rect x="2097.0" y="434.5" width="5.0" height="2.0" fill="#aaaaaa" />
<rect x="2097.0" y="444.1" width="5.0" height="2.0" fill="#aaaaaa" />
<rect x="2097.0" y="453.7" width="5.0" height="2.0" fill="#aaaaaa" />
<rect x="2097.0" y="463.3" width="5.0" height="2.0" fill="#aaaaaa" />
<rect x="2097.0" y="472.9" width="5.0" height="2.0" fill="#aaaaaa" />
<rect x="2097.0" y="482.5" width="5.0" height="2.0" fill="#aaaaaa" />
<rect x="2097.0" y="492.1" width="5.0" height="2.0" fill="#aaaaaa" />
<rect x="2097.0" y="501.7" width="5.0" height="2.0" fill="#aaaaaa" />
<rect x="2097.0" y="511.3" width="5.0" height="2.0" fill="#aaaaaa" />
<rect x="2097.0" y="520.9" width="5.0" height="2.0" fill="#aaaaaa" />
<rect x="2097.0" y="530.5" width="5.0" height="2.0" fill="#aaaaaa" />
<rect x="2097.0" y="540.1" width="5.0" height="2.0" fill="#aaaaaa" />
<rect x="2097.0" y="549.7" width="5.0" height="2.0" fill="#aaaaaa" />
<rect x="2097.0" y="559.3" width="5.0" height="2.0" fill="#aaaaaa" />
<rect x="2097.0" y="568.9" width="5.0" height="2.0" fill="#aaaaaa" />
<rect x="2097.0" y="578.5" width="5.0" height="2.0" fill="#aaaaaa" />
<text x="2084" y="395.5" font-size="16" fill="#444" text-anchor="end" font-weight="bold" >1</text>
<text x="2085" y="489.0" font-size="16" fill="#555" text-anchor="end" font-weight="bold" >0</text>
<text x="2084" y="588.5" font-size="16" fill="#444" text-anchor="end" font-weight="bold" >-1</text>
<rect x="490.0" y="385.5" width="386.0" height="48.0" fill="#ffffff" opacity="0.84"/>
<circle cx="506" cy="410.5" r="8.5" fill="#c4c4c4" stroke="#999" stroke-width="2.5"/>
<path d="M502 406.5 l8 8 m0 -8 l-8 8" stroke="#fff" stroke-width="2" fill="none"/>
<text x="528" y="419.5" font-size="24" fill="#3c3c3c" text-anchor="start" font-weight="normal" textLength="290" lengthAdjust="spacingAndGlyphs" stroke="#3c3c3c" stroke-width="0.6">mC_Appt-1_Schmitz_2013</text>
<rect x="490.0" y="712.8" width="3226.0" height="1.6" fill="#dcdcdc" opacity="0.6"/>
<rect x="490.0" y="714.2" width="3226.0" height="4.0" fill="#c2c2c2" opacity="0.92"/>
<rect x="490.0" y="718.0" width="3226.0" height="1.6" fill="#e2e2e2" opacity="0.5"/>
<rect x="2101.5" y="620.0" width="3.0" height="192.0" fill="#9a9a9a" />
<rect x="2091.0" y="619.0" width="12.0" height="3.0" fill="#9a9a9a" />
<rect x="2091.0" y="810.0" width="12.0" height="3.0" fill="#9a9a9a" />
<rect x="2091.0" y="714.5" width="12.0" height="3.0" fill="#9a9a9a" />
<rect x="2097.0" y="619.0" width="5.0" height="2.0" fill="#aaaaaa" />
<rect x="2097.0" y="628.6" width="5.0" height="2.0" fill="#aaaaaa" />
<rect x="2097.0" y="638.2" width="5.0" height="2.0" fill="#aaaaaa" />
<rect x="2097.0" y="647.8" width="5.0" height="2.0" fill="#aaaaaa" />
<rect x="2097.0" y="657.4" width="5.0" height="2.0" fill="#aaaaaa" />
<rect x="2097.0" y="667.0" width="5.0" height="2.0" fill="#aaaaaa" />
<rect x="2097.0" y="676.6" width="5.0" height="2.0" fill="#aaaaaa" />
<rect x="2097.0" y="686.2" width="5.0" height="2.0" fill="#aaaaaa" />
<rect x="2097.0" y="695.8" width="5.0" height="2.0" fill="#aaaaaa" />
<rect x="2097.0" y="705.4" width="5.0" height="2.0" fill="#aaaaaa" />
<rect x="2097.0" y="715.0" width="5.0" height="2.0" fill="#aaaaaa" />
<rect x="2097.0" y="724.6" width="5.0" height="2.0" fill="#aaaaaa" />
<rect x="2097.0" y="734.2" width="5.0" height="2.0" fill="#aaaaaa" />
<rect x="2097.0" y="743.8" width="5.0" height="2.0" fill="#aaaaaa" />
<rect x="2097.0" y="753.4" width="5.0" height="2.0" fill="#aaaaaa" />
<rect x="2097.0" y="763.0" width="5.0" height="2.0" fill="#aaaaaa" />
<rect x="2097.0" y="772.6" width="5.0" height="2.0" fill="#aaaaaa" />
<rect x="2097.0" y="782.2" width="5.0" height="2.0" fill="#aaaaaa" />
<rect x="2097.0" y="791.8" width="5.0" height="2.0" fill="#aaaaaa" />
<rect x="2097.0" y="801.4" width="5.0" height="2.0" fill="#aaaaaa" />
<rect x="2097.0" y="811.0" width="5.0" height="2.0" fill="#aaaaaa" />
<text x="2084" y="628" font-size="16" fill="#444" text-anchor="end" font-weight="bold" >1</text>
<text x="2085" y="721.5" font-size="16" fill="#555" text-anchor="end" font-weight="bold" >0</text>
<text x="2084" y="821" font-size="16" fill="#444" text-anchor="end" font-weight="bold" >-1</text>
<rect x="490.0" y="618.0" width="363.0" height="48.0" fill="#ffffff" opacity="0.84"/>
<circle cx="506" cy="643" r="8.5" fill="#c4c4c4" stroke="#999" stroke-width="2.5"/>
<path d="M502 639 l8 8 m0 -8 l-8 8" stroke="#fff" stroke-width="2" fill="none"/>
<text x="528" y="652" font-size="24" fill="#3c3c3c" text-anchor="start" font-weight="normal" textLength="267" lengthAdjust="spacingAndGlyphs" stroke="#3c3c3c" stroke-width="0.6">mC_Gy-0_Schmitz_2013</text>
<rect x="490.0" y="945.8" width="3226.0" height="1.6" fill="#dcdcdc" opacity="0.6"/>
<rect x="490.0" y="947.2" width="3226.0" height="4.0" fill="#c2c2c2" opacity="0.92"/>
<rect x="490.0" y="951.0" width="3226.0" height="1.6" fill="#e2e2e2" opacity="0.5"/>
<rect x="2101.5" y="853.0" width="3.0" height="192.0" fill="#9a9a9a" />
<rect x="2091.0" y="852.0" width="12.0" height="3.0" fill="#9a9a9a" />
<rect x="2091.0" y="1043.0" width="12.0" height="3.0" fill="#9a9a9a" />
<rect x="2091.0" y="947.5" width="12.0" height="3.0" fill="#9a9a9a" />
<rect x="2097.0" y="852.0" width="5.0" height="2.0" fill="#aaaaaa" />
<rect x="2097.0" y="861.6" width="5.0" height="2.0" fill="#aaaaaa" />
<rect x="2097.0" y="871.2" width="5.0" height="2.0" fill="#aaaaaa" />
<rect x="2097.0" y="880.8" width="5.0" height="2.0" fill="#aaaaaa" />
<rect x="2097.0" y="890.4" width="5.0" height="2.0" fill="#aaaaaa" />
<rect x="2097.0" y="900.0" width="5.0" height="2.0" fill="#aaaaaa" />
<rect x="2097.0" y="909.6" width="5.0" height="2.0" fill="#aaaaaa" />
<rect x="2097.0" y="919.2" width="5.0" height="2.0" fill="#aaaaaa" />
<rect x="2097.0" y="928.8" width="5.0" height="2.0" fill="#aaaaaa" />
<rect x="2097.0" y="938.4" width="5.0" height="2.0" fill="#aaaaaa" />
<rect x="2097.0" y="948.0" width="5.0" height="2.0" fill="#aaaaaa" />
<rect x="2097.0" y="957.6" width="5.0" height="2.0" fill="#aaaaaa" />
<rect x="2097.0" y="967.2" width="5.0" height="2.0" fill="#aaaaaa" />
<rect x="2097.0" y="976.8" width="5.0" height="2.0" fill="#aaaaaa" />
<rect x="2097.0" y="986.4" width="5.0" height="2.0" fill="#aaaaaa" />
<rect x="2097.0" y="996.0" width="5.0" height="2.0" fill="#aaaaaa" />
<rect x="2097.0" y="1005.6" width="5.0" height="2.0" fill="#aaaaaa" />
<rect x="2097.0" y="1015.2" width="5.0" height="2.0" fill="#aaaaaa" />
<rect x="2097.0" y="1024.8" width="5.0" height="2.0" fill="#aaaaaa" />
<rect x="2097.0" y="1034.4" width="5.0" height="2.0" fill="#aaaaaa" />
<rect x="2097.0" y="1044.0" width="5.0" height="2.0" fill="#aaaaaa" />
<text x="2084" y="861" font-size="16" fill="#444" text-anchor="end" font-weight="bold" >1</text>
<text x="2085" y="954.5" font-size="16" fill="#555" text-anchor="end" font-weight="bold" >0</text>
<text x="2084" y="1054" font-size="16" fill="#444" text-anchor="end" font-weight="bold" >-1</text>
<rect x="490.0" y="851.0" width="371.0" height="48.0" fill="#ffffff" opacity="0.84"/>
<circle cx="506" cy="876" r="8.5" fill="#c4c4c4" stroke="#999" stroke-width="2.5"/>
<path d="M502 872 l8 8 m0 -8 l-8 8" stroke="#fff" stroke-width="2" fill="none"/>
<text x="528" y="885" font-size="24" fill="#3c3c3c" text-anchor="start" font-weight="normal" textLength="272" lengthAdjust="spacingAndGlyphs" stroke="#3c3c3c" stroke-width="0.6">mC_Col-0_Schmitz_2013</text>
<rect x="490.0" y="1178.3" width="3226.0" height="1.6" fill="#dcdcdc" opacity="0.6"/>
<rect x="490.0" y="1179.7" width="3226.0" height="4.0" fill="#c2c2c2" opacity="0.92"/>
<rect x="490.0" y="1183.5" width="3226.0" height="1.6" fill="#e2e2e2" opacity="0.5"/>
<rect x="2101.5" y="1085.5" width="3.0" height="192.0" fill="#9a9a9a" />
<rect x="2091.0" y="1084.5" width="12.0" height="3.0" fill="#9a9a9a" />
<rect x="2091.0" y="1275.5" width="12.0" height="3.0" fill="#9a9a9a" />
<rect x="2091.0" y="1180.0" width="12.0" height="3.0" fill="#9a9a9a" />
<rect x="2097.0" y="1084.5" width="5.0" height="2.0" fill="#aaaaaa" />
<rect x="2097.0" y="1094.1" width="5.0" height="2.0" fill="#aaaaaa" />
<rect x="2097.0" y="1103.7" width="5.0" height="2.0" fill="#aaaaaa" />
<rect x="2097.0" y="1113.3" width="5.0" height="2.0" fill="#aaaaaa" />
<rect x="2097.0" y="1122.9" width="5.0" height="2.0" fill="#aaaaaa" />
<rect x="2097.0" y="1132.5" width="5.0" height="2.0" fill="#aaaaaa" />
<rect x="2097.0" y="1142.1" width="5.0" height="2.0" fill="#aaaaaa" />
<rect x="2097.0" y="1151.7" width="5.0" height="2.0" fill="#aaaaaa" />
<rect x="2097.0" y="1161.3" width="5.0" height="2.0" fill="#aaaaaa" />
<rect x="2097.0" y="1170.9" width="5.0" height="2.0" fill="#aaaaaa" />
<rect x="2097.0" y="1180.5" width="5.0" height="2.0" fill="#aaaaaa" />
<rect x="2097.0" y="1190.1" width="5.0" height="2.0" fill="#aaaaaa" />
<rect x="2097.0" y="1199.7" width="5.0" height="2.0" fill="#aaaaaa" />
<rect x="2097.0" y="1209.3" width="5.0" height="2.0" fill="#aaaaaa" />
<rect x="2097.0" y="1218.9" width="5.0" height="2.0" fill="#aaaaaa" />
<rect x="2097.0" y="1228.5" width="5.0" height="2.0" fill="#aaaaaa" />
<rect x="2097.0" y="1238.1" width="5.0" height="2.0" fill="#aaaaaa" />
<rect x="2097.0" y="1247.7" width="5.0" height="2.0" fill="#aaaaaa" />
<rect x="2097.0" y="1257.3" width="5.0" height="2.0" fill="#aaaaaa" />
<rect x="2097.0" y="1266.9" width="5.0" height="2.0" fill="#aaaaaa" />
<rect x="2097.0" y="1276.5" width="5.0" height="2.0" fill="#aaaaaa" />
<text x="2084" y="1093.5" font-size="16" fill="#444" text-anchor="end" font-weight="bold" >1</text>
<text x="2085" y="1187.0" font-size="16" fill="#555" text-anchor="end" font-weight="bold" >0</text>
<text x="2084" y="1286.5" font-size="16" fill="#444" text-anchor="end" font-weight="bold" >-1</text>
<rect x="490.0" y="1083.5" width="371.0" height="48.0" fill="#ffffff" opacity="0.84"/>
<circle cx="506" cy="1108.5" r="8.5" fill="#c4c4c4" stroke="#999" stroke-width="2.5"/>
<path d="M502 1104.5 l8 8 m0 -8 l-8 8" stroke="#fff" stroke-width="2" fill="none"/>
<text x="528" y="1117.5" font-size="24" fill="#3c3c3c" text-anchor="start" font-weight="normal" textLength="272" lengthAdjust="spacingAndGlyphs" stroke="#3c3c3c" stroke-width="0.6">mC_Cvi-0_Schmitz_2013</text>
<rect x="490.0" y="1410.8" width="3226.0" height="1.6" fill="#dcdcdc" opacity="0.6"/>
<rect x="490.0" y="1412.2" width="3226.0" height="4.0" fill="#c2c2c2" opacity="0.92"/>
<rect x="490.0" y="1416.0" width="3226.0" height="1.6" fill="#e2e2e2" opacity="0.5"/>
<rect x="2101.5" y="1318.0" width="3.0" height="192.0" fill="#9a9a9a" />
<rect x="2091.0" y="1317.0" width="12.0" height="3.0" fill="#9a9a9a" />
<rect x="2091.0" y="1508.0" width="12.0" height="3.0" fill="#9a9a9a" />
<rect x="2091.0" y="1412.5" width="12.0" height="3.0" fill="#9a9a9a" />
<rect x="2097.0" y="1317.0" width="5.0" height="2.0" fill="#aaaaaa" />
<rect x="2097.0" y="1326.6" width="5.0" height="2.0" fill="#aaaaaa" />
<rect x="2097.0" y="1336.2" width="5.0" height="2.0" fill="#aaaaaa" />
<rect x="2097.0" y="1345.8" width="5.0" height="2.0" fill="#aaaaaa" />
<rect x="2097.0" y="1355.4" width="5.0" height="2.0" fill="#aaaaaa" />
<rect x="2097.0" y="1365.0" width="5.0" height="2.0" fill="#aaaaaa" />
<rect x="2097.0" y="1374.6" width="5.0" height="2.0" fill="#aaaaaa" />
<rect x="2097.0" y="1384.2" width="5.0" height="2.0" fill="#aaaaaa" />
<rect x="2097.0" y="1393.8" width="5.0" height="2.0" fill="#aaaaaa" />
<rect x="2097.0" y="1403.4" width="5.0" height="2.0" fill="#aaaaaa" />
<rect x="2097.0" y="1413.0" width="5.0" height="2.0" fill="#aaaaaa" />
<rect x="2097.0" y="1422.6" width="5.0" height="2.0" fill="#aaaaaa" />
<rect x="2097.0" y="1432.2" width="5.0" height="2.0" fill="#aaaaaa" />
<rect x="2097.0" y="1441.8" width="5.0" height="2.0" fill="#aaaaaa" />
<rect x="2097.0" y="1451.4" width="5.0" height="2.0" fill="#aaaaaa" />
<rect x="2097.0" y="1461.0" width="5.0" height="2.0" fill="#aaaaaa" />
<rect x="2097.0" y="1470.6" width="5.0" height="2.0" fill="#aaaaaa" />
<rect x="2097.0" y="1480.2" width="5.0" height="2.0" fill="#aaaaaa" />
<rect x="2097.0" y="1489.8" width="5.0" height="2.0" fill="#aaaaaa" />
<rect x="2097.0" y="1499.4" width="5.0" height="2.0" fill="#aaaaaa" />
<rect x="2097.0" y="1509.0" width="5.0" height="2.0" fill="#aaaaaa" />
<text x="2084" y="1326" font-size="16" fill="#444" text-anchor="end" font-weight="bold" >1</text>
<text x="2085" y="1419.5" font-size="16" fill="#555" text-anchor="end" font-weight="bold" >0</text>
<text x="2084" y="1519" font-size="16" fill="#444" text-anchor="end" font-weight="bold" >-1</text>
<rect x="490.0" y="1316.0" width="362.0" height="48.0" fill="#ffffff" opacity="0.84"/>
<circle cx="506" cy="1341" r="8.5" fill="#c4c4c4" stroke="#999" stroke-width="2.5"/>
<path d="M502 1337 l8 8 m0 -8 l-8 8" stroke="#fff" stroke-width="2" fill="none"/>
<text x="528" y="1350" font-size="24" fill="#3c3c3c" text-anchor="start" font-weight="normal" textLength="267" lengthAdjust="spacingAndGlyphs" stroke="#3c3c3c" stroke-width="0.6">mC_Ak-1_Schmitz_2013</text>
<rect x="490.0" y="1643.3" width="3226.0" height="1.6" fill="#dcdcdc" opacity="0.6"/>
<rect x="490.0" y="1644.7" width="3226.0" height="4.0" fill="#c2c2c2" opacity="0.92"/>
<rect x="490.0" y="1648.5" width="3226.0" height="1.6" fill="#e2e2e2" opacity="0.5"/>
<rect x="2101.5" y="1550.5" width="3.0" height="192.0" fill="#9a9a9a" />
<rect x="2091.0" y="1549.5" width="12.0" height="3.0" fill="#9a9a9a" />
<rect x="2091.0" y="1740.5" width="12.0" height="3.0" fill="#9a9a9a" />
<rect x="2091.0" y="1645.0" width="12.0" height="3.0" fill="#9a9a9a" />
<rect x="2097.0" y="1549.5" width="5.0" height="2.0" fill="#aaaaaa" />
<rect x="2097.0" y="1559.1" width="5.0" height="2.0" fill="#aaaaaa" />
<rect x="2097.0" y="1568.7" width="5.0" height="2.0" fill="#aaaaaa" />
<rect x="2097.0" y="1578.3" width="5.0" height="2.0" fill="#aaaaaa" />
<rect x="2097.0" y="1587.9" width="5.0" height="2.0" fill="#aaaaaa" />
<rect x="2097.0" y="1597.5" width="5.0" height="2.0" fill="#aaaaaa" />
<rect x="2097.0" y="1607.1" width="5.0" height="2.0" fill="#aaaaaa" />
<rect x="2097.0" y="1616.7" width="5.0" height="2.0" fill="#aaaaaa" />
<rect x="2097.0" y="1626.3" width="5.0" height="2.0" fill="#aaaaaa" />
<rect x="2097.0" y="1635.9" width="5.0" height="2.0" fill="#aaaaaa" />
<rect x="2097.0" y="1645.5" width="5.0" height="2.0" fill="#aaaaaa" />
<rect x="2097.0" y="1655.1" width="5.0" height="2.0" fill="#aaaaaa" />
<rect x="2097.0" y="1664.7" width="5.0" height="2.0" fill="#aaaaaa" />
<rect x="2097.0" y="1674.3" width="5.0" height="2.0" fill="#aaaaaa" />
<rect x="2097.0" y="1683.9" width="5.0" height="2.0" fill="#aaaaaa" />
<rect x="2097.0" y="1693.5" width="5.0" height="2.0" fill="#aaaaaa" />
<rect x="2097.0" y="1703.1" width="5.0" height="2.0" fill="#aaaaaa" />
<rect x="2097.0" y="1712.7" width="5.0" height="2.0" fill="#aaaaaa" />
<rect x="2097.0" y="1722.3" width="5.0" height="2.0" fill="#aaaaaa" />
<rect x="2097.0" y="1731.9" width="5.0" height="2.0" fill="#aaaaaa" />
<rect x="2097.0" y="1741.5" width="5.0" height="2.0" fill="#aaaaaa" />
<text x="2084" y="1558.5" font-size="16" fill="#444" text-anchor="end" font-weight="bold" >1</text>
<text x="2085" y="1652.0" font-size="16" fill="#555" text-anchor="end" font-weight="bold" >0</text>
<text x="2084" y="1751.5" font-size="16" fill="#444" text-anchor="end" font-weight="bold" >-1</text>
<rect x="490.0" y="1548.5" width="405.0" height="48.0" fill="#ffffff" opacity="0.84"/>
<circle cx="506" cy="1573.5" r="8.5" fill="#c4c4c4" stroke="#999" stroke-width="2.5"/>
<path d="M502 1569.5 l8 8 m0 -8 l-8 8" stroke="#fff" stroke-width="2" fill="none"/>
<text x="528" y="1582.5" font-size="24" fill="#3c3c3c" text-anchor="start" font-weight="normal" textLength="310" lengthAdjust="spacingAndGlyphs" stroke="#3c3c3c" stroke-width="0.6">mC_Fr-2-bud_Schmitz_2013</text>
</g>
</g>
<g filter="url(#soft2)">
<text x="74.4" y="519.7" font-size="116" fill="#000" text-anchor="start" font-weight="normal" textLength="360.1" lengthAdjust="spacingAndGlyphs" stroke="#000" stroke-width="1.2">Appt-1</text>
<text x="101.3" y="769" font-size="116" fill="#000" text-anchor="start" font-weight="normal" textLength="245.9" lengthAdjust="spacingAndGlyphs" stroke="#000" stroke-width="1.2">Gy-0</text>
<text x="101.6" y="1004" font-size="116" fill="#000" text-anchor="start" font-weight="normal" textLength="276.3" lengthAdjust="spacingAndGlyphs" stroke="#000" stroke-width="1.2">Col-0</text>
<text x="94" y="1245" font-size="116" fill="#000" text-anchor="start" font-weight="normal" textLength="266.7" lengthAdjust="spacingAndGlyphs" stroke="#000" stroke-width="1.2">Cvi-0</text>
<text x="115" y="1487.5" font-size="116" fill="#000" text-anchor="start" font-weight="normal" textLength="237.8" lengthAdjust="spacingAndGlyphs" stroke="#000" stroke-width="1.2">Ak-1</text>
<text x="127.1" y="1687.5" font-size="116" fill="#000" text-anchor="start" font-weight="normal" textLength="210.1" lengthAdjust="spacingAndGlyphs" stroke="#000" stroke-width="1.2">Fr-2</text>
</g>
<rect x="45.0" y="37.5" width="3686.0" height="2.2" fill="#3a3a3a" />
<rect x="45.0" y="37.5" width="4.0" height="1690.5" fill="#2a2a2a" />
<rect x="45.0" y="1724.0" width="3686.0" height="4.0" fill="#2a2a2a" />
<rect x="3724.5" y="37.5" width="5.5" height="1690.5" fill="#000" />
<rect x="3730.0" y="37.5" width="2.0" height="1690.5" fill="#555" />
<rect x="3718.0" y="860.0" width="4.0" height="37.0" fill="#e2e2e2" />
</svg>
</body></html>
